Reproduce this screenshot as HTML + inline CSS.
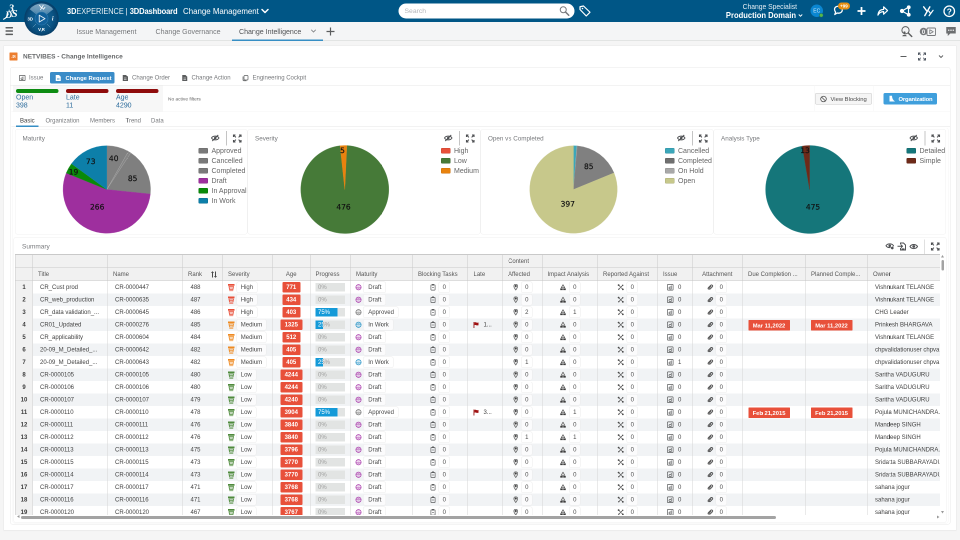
<!DOCTYPE html>
<html lang="en"><head><meta charset="utf-8"><title>3DDashboard - Change Intelligence</title>
<style>
html,body{margin:0;padding:0;background:#f5f5f5;}
body{width:960px;height:540px;overflow:hidden;position:relative;}
#root{position:absolute;left:0;top:0;width:1920px;height:1080px;transform:scale(.5) translateZ(0);will-change:transform;transform-origin:0 0;font-family:"Liberation Sans",sans-serif;color:#555;overflow:hidden;background:#f5f5f5;}
#root *{box-sizing:border-box;}
.abs{position:absolute;white-space:nowrap;}
.topbar{position:absolute;left:0;top:0;width:1920px;height:44px;background:#005686;}
.tabbar{position:absolute;left:0;top:44px;width:1920px;height:38px;background:#f4f5f6;border-bottom:2px solid #e2e4e3;}
.tab{position:absolute;top:9px;font-size:14.1px;color:#77797c;white-space:nowrap;line-height:20px;}
.panel{position:absolute;left:7px;top:91px;width:1906px;height:970px;background:#fff;border:1px solid #e9e9e9;box-shadow:0 1px 2px rgba(0,0,0,.04);}
.inner{position:absolute;left:20px;top:134px;width:1881px;height:915px;border:1px solid #e9e9e9;border-radius:5px;background:#fff;}
.wtab{position:absolute;top:144px;height:23px;font-size:12px;line-height:23px;color:#77797c;white-space:nowrap;}
.kpi{position:absolute;top:178px;width:85px;}
.kpi i{display:block;height:8px;border-radius:4px;}
.kpi b{display:block;font-weight:normal;font-size:14px;line-height:16px;color:#2d6c9c;margin-top:-0.5px;}
.btn{position:absolute;top:186px;height:23px;font-size:11.7px;line-height:21px;border-radius:3px;white-space:nowrap;}
.stab{position:absolute;top:232px;font-size:12px;line-height:18px;color:#77797c;white-space:nowrap;}
.chart{position:absolute;top:258px;height:211px;background:#fff;border:1px solid #f0f0f0;border-radius:5px;}
.ctitle{position:absolute;left:14px;top:10px;font-size:12.6px;line-height:16px;color:#77797c;}
.leg{position:absolute;top:32px;font-size:14px;line-height:20px;color:#666;white-space:nowrap;}
.leg div{height:20px;position:relative;padding-left:26px;}
.leg s{position:absolute;left:0;top:5px;width:19px;height:11px;border-radius:2px;box-shadow:inset 0 0 0 1px rgba(0,0,0,.13);}
.plab{font-family:"DejaVu Sans",sans-serif;font-size:15px;fill:#111;stroke:#111;stroke-width:.35px;text-anchor:middle;}
.summary{position:absolute;left:27px;top:474px;width:1866px;height:572px;background:#fff;border:1px solid #eeeeee;border-radius:5px;}
.th{position:absolute;background:#f1f1f1;border-right:1px solid #c9c9c9;border-bottom:1px solid #c9c9c9;font-size:12px;color:#555;line-height:26px;white-space:nowrap;overflow:hidden;}
.row{position:absolute;left:0;width:1850px;height:25px;font-size:12px;color:#424242;line-height:25px;}
.row.e{background:#f1f3f5;}
.c{position:absolute;top:0;height:25px;white-space:nowrap;overflow:hidden;}
.n{position:absolute;left:0;top:0;width:35px;height:25px;background:#f1f1f1;border-right:1px solid #cfcfcf;text-align:center;font-weight:bold;color:#3c3c3c;}
.vl{position:absolute;top:0;width:1px;background:#d4d4d4;}
.pill{position:absolute;top:1px;height:23px;line-height:21px;border:1px solid #ebebeb;border-radius:4px;background:#fff;padding:0 8px;font-size:12px;color:#4a4a4a;}
.row.e .pill{background:#fbfbfc;}
.age{position:absolute;top:2px;height:21px;line-height:21px;border-radius:2px;background:#e8503a;color:#fff;font-weight:bold;font-size:12px;text-align:center;}
.pb{position:absolute;left:10px;top:4px;width:59px;height:16.5px;background:#e2e4e3;font-size:12px;line-height:16.5px;color:#9c9c9c;overflow:hidden;}
.pb u{position:absolute;left:0;top:0;height:16.5px;background:#149ad8;text-decoration:none;}
.pb span{position:absolute;left:5px;top:0;}
.date{position:absolute;top:2.5px;left:11.5px;width:83px;height:21px;line-height:21px;background:#e8503a;color:#fff;font-weight:bold;font-size:11.6px;text-align:center;border-radius:1px;}
svg{position:absolute;overflow:visible;}
</style></head><body><div id="root">
<div class="topbar"><svg style="left:6px;top:6px" width="34" height="34" viewBox="0 0 34 34"><g fill="#fff" font-family="Liberation Serif" font-style="italic" font-weight="bold"><text x="11.5" y="17" font-size="21">3</text><text x="4.5" y="29.5" font-size="19">D</text><text x="17" y="28" font-size="22">S</text></g><path d="M1 32.5c4-1.5 7-5 9.5-10.5" stroke="#fff" stroke-width="2" fill="none" stroke-linecap="round"/></svg><div class="abs" style="left:134px;top:11px;font-size:16px;line-height:22px;color:#fff;transform:scaleX(.918);transform-origin:0 50%"><b>3D</b><span style="opacity:.92">EXPERIENCE</span> <span style="font-weight:normal">|</span> <b style="font-size:16.5px;letter-spacing:-0.3px">3DDashboard</b></div><div class="abs" style="left:366px;top:10px;font-size:17.2px;line-height:24px;color:#fff;transform:scaleX(.918);transform-origin:0 50%">Change Management</div><svg style="left:522px;top:16px" width="16" height="12" viewBox="0 0 16 12"><path d="M2 3l6 6 6-6" fill="none" stroke="#fff" stroke-width="3" stroke-linecap="round" stroke-linejoin="round"/></svg><div class="abs" style="left:797px;top:7px;width:352px;height:30px;border-radius:15px;background:#fff;"></div><div class="abs" style="left:809px;top:13px;font-size:13.6px;line-height:18px;color:#b4b6ba;">Search</div><svg style="left:1118px;top:11px" width="22" height="22" viewBox="0 0 22 22"><circle cx="8.5" cy="8.5" r="6" fill="none" stroke="#77797c" stroke-width="2"/><path d="M13 13l6.5 6.5" stroke="#77797c" stroke-width="3" stroke-linecap="round"/></svg><svg style="left:1157px;top:9px" width="26" height="26" viewBox="0 0 26 26"><path d="M3 4.5l7-1.5 13 12.5-7.5 7.5L3 10z" fill="none" stroke="#fff" stroke-width="2.4" stroke-linejoin="round"/><circle cx="8" cy="8" r="1.6" fill="#fff"/></svg><div class="abs" style="left:1400px;top:2.5px;width:194px;text-align:right;font-size:14.6px;line-height:20px;color:#e4edf3;transform:scaleX(.925);transform-origin:100% 50%">Change Specialist</div><div class="abs" style="left:1400px;top:20px;width:192px;text-align:right;font-size:16.4px;line-height:20px;color:#fff;font-weight:bold;transform:scaleX(.927);transform-origin:100% 50%">Production Domain</div><svg style="left:1596px;top:27px" width="10" height="8" viewBox="0 0 10 8"><path d="M1.5 2l3.5 3.5L8.5 2" fill="none" stroke="#fff" stroke-width="1.8"/></svg><div class="abs" style="left:1621px;top:9px;width:25px;height:25px;border-radius:50%;background:#0a86d1;color:#d4e9f6;font-size:10px;line-height:25px;text-align:center;">EC</div><div class="abs" style="left:1638px;top:26px;width:9px;height:9px;border-radius:50%;background:#57b847;border:1px solid #005686"></div><svg style="left:1667px;top:11px" width="24" height="22" viewBox="0 0 30 28"><path d="M5 4c6-4 16-2 17 6 .8 7-6 11-13 9l-6 4 2-6C2 13 1 7 5 4z" fill="none" stroke="#fff" stroke-width="3.2" stroke-linejoin="round"/></svg><div class="abs" style="left:1676px;top:5px;width:24px;height:14px;border-radius:7px;background:#e68f12;color:#fff;font-size:9px;line-height:14px;text-align:center;font-weight:bold;">+99</div><svg style="left:1712px;top:11px" width="22" height="22" viewBox="0 0 22 22"><path d="M11 3v16M3 11h16" stroke="#fff" stroke-width="3.5"/></svg><svg style="left:1754px;top:11px" width="23" height="21" viewBox="0 0 26 24"><path d="M2 22c1-9 6-13 13-13V3l9 8.5-9 8.5v-6c-6 0-10 2-13 8z" fill="none" stroke="#fff" stroke-width="2.7" stroke-linejoin="round"/></svg><svg style="left:1799px;top:10px" width="24" height="24" viewBox="0 0 24 24"><path d="M5 12L18 4.5M5 12l13 7.5M18 4.5v15" stroke="#fff" stroke-width="2.4" fill="none"/><circle cx="5" cy="12" r="4.2" fill="#fff"/><circle cx="18.5" cy="4.5" r="3.8" fill="#fff"/><circle cx="18.5" cy="19.5" r="3.8" fill="#fff"/></svg><svg style="left:1844px;top:10px" width="24" height="24" viewBox="0 0 26 26"><path d="M3.5 4l6.5 8.5M17 4L6 23" stroke="#fff" stroke-width="3" fill="none" stroke-linecap="round"/><path d="M14.5 13l3.5 4.5M24 11.5L15.5 23" stroke="#fff" stroke-width="2.6" fill="none" stroke-linecap="round"/></svg><svg style="left:1886px;top:10px" width="26" height="26" viewBox="0 0 26 26"><circle cx="12.5" cy="12.5" r="10.5" fill="none" stroke="#fff" stroke-width="2.6"/><text x="12.5" y="18.5" text-anchor="middle" font-family="Liberation Sans" font-weight="bold" font-size="16.5" fill="#fff">?</text></svg></div><div class="tabbar"><div class="abs" style="left:11px;top:10px;width:15px;height:3px;background:#5b5d5e;box-shadow:0 6.6px 0 #5b5d5e,0 13.2px 0 #5b5d5e;border-radius:1px"></div><div class="tab" style="left:153px">Issue Management</div><div class="tab" style="left:311px">Change Governance</div><div class="tab" style="left:478px;color:#4f5154">Change Intelligence</div><div class="abs" style="left:464px;top:35px;width:182px;height:3px;background:#368ec4"></div><svg style="left:621px;top:14px" width="12" height="8" viewBox="0 0 12 8"><path d="M1.5 1.5l4.5 4.5 4.5-4.5" fill="none" stroke="#77797c" stroke-width="1.6"/></svg><svg style="left:652px;top:10px" width="18" height="18" viewBox="0 0 18 18"><path d="M9 1v16M1 9h16" stroke="#5b5d5e" stroke-width="2.4"/></svg><svg style="left:1801px;top:7px" width="26" height="24" viewBox="0 0 26 24"><circle cx="10" cy="9.5" r="7.2" fill="none" stroke="#5b5d5e" stroke-width="2"/><path d="M15.5 15l7 7" stroke="#5b5d5e" stroke-width="2.8" stroke-linecap="round"/><circle cx="8" cy="14" r="2.2" fill="#5b5d5e"/><path d="M3.5 21.5c.5-4 8.5-4 9 0z" fill="#5b5d5e"/></svg><svg style="left:1838px;top:8px" width="36" height="24" viewBox="0 0 36 24"><circle cx="9" cy="11" r="7.5" fill="#77797c"/><text x="9" y="15.5" text-anchor="middle" font-family="Liberation Sans" font-weight="bold" font-size="12" fill="#f4f5f6">0</text><rect x="16" y="4" width="17" height="15" rx="2" fill="none" stroke="#77797c" stroke-width="1.8"/><path d="M21.5 7.5v8l7-4z" fill="none" stroke="#77797c" stroke-width="1.6" stroke-linejoin="round"/></svg><svg style="left:1891px;top:8px" width="22" height="22" viewBox="0 0 22 22"><path d="M1.5 2h19v13h-11l-5 5v-5h-3z" fill="#6c6e70"/><circle cx="6.5" cy="8.5" r="1.4" fill="#f4f5f6"/><circle cx="11" cy="8.5" r="1.4" fill="#f4f5f6"/><circle cx="15.5" cy="8.5" r="1.4" fill="#f4f5f6"/></svg></div><svg style="left:48px;top:2px" width="70" height="70" viewBox="0 0 70 70">
<defs><radialGradient id="cg" cx="50%" cy="50%" r="50%"><stop offset="0" stop-color="#14649a"/><stop offset=".62" stop-color="#0c5788"/><stop offset=".85" stop-color="#084a78"/><stop offset="1" stop-color="#063d66"/></radialGradient>
<linearGradient id="ch" x1="0" y1="0" x2="0" y2="1"><stop offset="0" stop-color="#a9c6da" stop-opacity=".75"/><stop offset="1" stop-color="#6d9cbd" stop-opacity=".55"/></linearGradient></defs>
<circle cx="35" cy="35" r="34.5" fill="url(#cg)"/>
<path d="M35 35L11.4 16.5A30 30 0 0 1 58.6 16.5Z" fill="url(#ch)"/>
<path d="M35 35L21 21M35 35L49 21" stroke="#0c5788" stroke-width=".6" opacity=".5"/>
<path d="M17.5 52.5l6.5-6.5M52.5 52.5l-6.5-6.5" stroke="#7fa9c6" stroke-width="1"/>
<circle cx="35" cy="35" r="13" fill="#10609a" stroke="#2e7bb0" stroke-width="1.2"/>
<path d="M30.5 28.5v13.5l11.5-6.7z" fill="none" stroke="#e8f1f7" stroke-width="1.8" stroke-linejoin="round"/>
<text x="12.5" y="38.5" font-family="Liberation Sans" font-weight="bold" font-size="8.5" fill="#fff" text-anchor="middle">3D</text>
<text x="35" y="59.5" font-family="Liberation Sans" font-weight="bold" font-size="8.5" fill="#fff" text-anchor="middle">V,R</text>
<text x="57.5" y="39" font-family="Liberation Serif" font-style="italic" font-weight="bold" font-size="12" fill="#fff" text-anchor="middle">i</text>
<path d="M31 8.5l3.5 5M38.5 8.5l-5.5 9M36.5 13.5l2.5 3 3-4" stroke="#fff" stroke-width="1.5" fill="none" stroke-linecap="round"/>
</svg><div class="panel"></div><div class="abs" style="left:19px;top:105px;width:16px;height:16px;background:#ec7d2d;border-radius:1px;color:#fff;font:italic bold 9px/16px 'Liberation Serif',serif;text-align:center;letter-spacing:-1px">3S</div><div class="abs" style="left:46px;top:103px;font-size:13px;line-height:20px;font-weight:bold;color:#66686a;">NETVIBES - Change Intelligence</div><div class="abs" style="left:1801px;top:112px;width:12px;height:2px;background:#5b5d5e"></div><svg style="left:1836px;top:105px" width="16" height="16" viewBox="0 0 16 16"><path d="M1 5V1h4M11 1h4v4M15 11v4h-4M5 15H1v-4" fill="none" stroke="#4d5560" stroke-width="1.9"/><path d="M1 1l4.5 4.5M15 1l-4.5 4.5M15 15l-4.5-4.5M1 15l4.5-4.5" stroke="#4d5560" stroke-width="1.7"/></svg><svg style="left:1877px;top:110px" width="10" height="7" viewBox="0 0 10 7"><path d="M1 1l4 4 4-4" fill="none" stroke="#5b5d5e" stroke-width="1.8"/></svg><div class="inner"></div><svg style="left:38px;top:150px" width="13" height="12" viewBox="0 0 13 12"><rect x=".8" y=".8" width="11.4" height="10.4" rx="1" fill="none" stroke="#5b5d5e" stroke-width="1.4"/><path d="M8 3v6H5.5a1.6 1.6 0 0 1 0-3.2H8" fill="none" stroke="#5b5d5e" stroke-width="1.3"/></svg><div class="wtab" style="left:58px">Issue</div><div class="abs" style="left:100px;top:144px;width:129px;height:23px;background:#3a8cc8;border-radius:3px"></div><svg style="left:111px;top:150px" width="11" height="12" viewBox="0 0 11 12"><path d="M.500 0h6.5l3.5 3.5V12H.500z" fill="#fff"/><path d="M3 7.5h5M3 9.5h5" stroke="#3a8cc8" stroke-width="1"/></svg><div class="wtab" style="left:131px;color:#fff;font-weight:bold;font-size:11.7px">Change Request</div><svg style="left:245px;top:150px" width="11" height="12" viewBox="0 0 11 12"><path d="M.500 0h6.5l3.5 3.5V12H.500z" fill="#5b5d5e"/><path d="M3 6h5M3 8.5h5" stroke="#fff" stroke-width="1"/></svg><div class="wtab" style="left:264px">Change Order</div><svg style="left:364px;top:150px" width="11" height="12" viewBox="0 0 11 12"><path d="M.500 0h6.5l3.5 3.5V12H.500z" fill="#5b5d5e"/><path d="M3 6h5M3 8.5h5" stroke="#fff" stroke-width="1"/></svg><div class="wtab" style="left:383px">Change Action</div><svg style="left:485px;top:150px" width="12" height="12" viewBox="0 0 12 12"><rect x="3" y="1" width="8" height="9" rx="1.5" fill="none" stroke="#5b5d5e" stroke-width="1.4"/><path d="M1 3v6.5a2 2 0 0 0 2 2h5" fill="none" stroke="#5b5d5e" stroke-width="1.4"/></svg><div class="wtab" style="left:505px">Engineering Cockpit</div><div class="abs" style="left:21px;top:170px;width:1879px;height:1px;background:#e6e6e6"></div><div class="abs" style="left:26px;top:171px;width:300px;height:53px;background:#f7f7f7"></div><div class="kpi" style="left:32px"><i style="background:#0d8c12"></i><b>Open</b><b style="margin-top:0.5px">398</b></div><div class="kpi" style="left:132px"><i style="background:#8f0c0c"></i><b>Late</b><b style="margin-top:0.5px">11</b></div><div class="kpi" style="left:232px"><i style="background:#8f0c0c"></i><b>Age</b><b style="margin-top:0.5px">4290</b></div><div class="abs" style="left:336px;top:192px;font-size:9.6px;line-height:12px;color:#666">No active filters</div><div class="btn" style="left:1630px;width:114px;border:1px solid #c8c8c8;background:#f5f5f5;color:#4a4a4a;padding-left:30px">View Blocking</div><svg style="left:1640px;top:191px" width="14" height="14" viewBox="0 0 14 14"><circle cx="7" cy="7" r="5.6" fill="none" stroke="#4a4a4a" stroke-width="1.5"/><path d="M3 3l8 8" stroke="#4a4a4a" stroke-width="1.5"/></svg><div class="btn" style="left:1767px;width:107px;background:#3f9fdc;color:#fff;padding-left:30px;line-height:23px;font-weight:bold;letter-spacing:-0.3px">Organization</div><svg style="left:1778px;top:191px" width="12" height="13" viewBox="0 0 12 13"><path d="M.500 .500h5.5c0 5 2 9 6 11.5H.500z" fill="#fff"/></svg><div class="abs" style="left:23px;top:222px;width:1877px;height:1px;background:#f4f4f4"></div><div class="abs" style="left:1629px;top:170px;width:1px;height:52px;background:#f5f5f5"></div><div class="abs" style="left:1746px;top:170px;width:1px;height:52px;background:#f5f5f5"></div><div class="stab" style="left:40px;color:#3c3c3c">Basic</div><div class="stab" style="left:91px;color:#77797c">Organization</div><div class="stab" style="left:180px;color:#77797c">Members</div><div class="stab" style="left:251px;color:#77797c">Trend</div><div class="stab" style="left:302px;color:#77797c">Data</div><div class="abs" style="left:23px;top:252px;width:1877px;height:1px;background:#e4e4e4"></div><div class="abs" style="left:32px;top:250.5px;width:45px;height:3px;background:#368ec4"></div><div class="abs" style="left:25px;top:255px;width:1872px;height:792px;border:1px solid #f5f5f5;border-radius:5px"></div><div class="chart" style="left:30px;width:465px"><div class="ctitle">Maturity</div><svg style="left:391px;top:10px" width="17" height="14" viewBox="0 0 17 14"><path d="M1 7c3-5 12-5 15 0-3 5-12 5-15 0z" fill="none" stroke="#4d4f52" stroke-width="1.8"/><circle cx="8.5" cy="7" r="2.5" fill="#4d4f52"/><path d="M2.5 13L14.5 1" stroke="#4d4f52" stroke-width="1.9"/></svg><div class="abs" style="left:421px;top:3px;width:1.5px;height:29px;background:#c4c4c4"></div><svg style="left:434.5px;top:9.5px" width="17" height="16" viewBox="0 0 17 16"><path d="M1 5V1h4M12 1h4v4M16 11v4h-4M5 15H1v-4" fill="none" stroke="#4d4f52" stroke-width="2.2"/><path d="M1 1l4.8 4.8M16 1l-4.8 4.8M16 15l-4.8-4.8M1 15l4.8-4.8" stroke="#4d4f52" stroke-width="2"/></svg><div class="leg" style="left:366px"><div><s style="background:#7a7a7a"></s>Approved</div><div><s style="background:#7a7a7a"></s>Cancelled</div><div><s style="background:#7a7a7a"></s>Completed</div><div><s style="background:#9e2f9e"></s>Draft</div><div><s style="background:#0a8a0a"></s>In Approval</div><div><s style="background:#0d7fa9"></s>In Work</div></div></div><div class="chart" style="left:495px;width:466px"><div class="ctitle">Severity</div><svg style="left:392px;top:10px" width="17" height="14" viewBox="0 0 17 14"><path d="M1 7c3-5 12-5 15 0-3 5-12 5-15 0z" fill="none" stroke="#4d4f52" stroke-width="1.8"/><circle cx="8.5" cy="7" r="2.5" fill="#4d4f52"/><path d="M2.5 13L14.5 1" stroke="#4d4f52" stroke-width="1.9"/></svg><div class="abs" style="left:422px;top:3px;width:1.5px;height:29px;background:#c4c4c4"></div><svg style="left:435.5px;top:9.5px" width="17" height="16" viewBox="0 0 17 16"><path d="M1 5V1h4M12 1h4v4M16 11v4h-4M5 15H1v-4" fill="none" stroke="#4d4f52" stroke-width="2.2"/><path d="M1 1l4.8 4.8M16 1l-4.8 4.8M16 15l-4.8-4.8M1 15l4.8-4.8" stroke="#4d4f52" stroke-width="2"/></svg><div class="leg" style="left:386px"><div><s style="background:#e8503a"></s>High</div><div><s style="background:#467a38"></s>Low</div><div><s style="background:#e8820e"></s>Medium</div></div></div><div class="chart" style="left:961px;width:466px"><div class="ctitle">Open vs Completed</div><svg style="left:392px;top:10px" width="17" height="14" viewBox="0 0 17 14"><path d="M1 7c3-5 12-5 15 0-3 5-12 5-15 0z" fill="none" stroke="#4d4f52" stroke-width="1.8"/><circle cx="8.5" cy="7" r="2.5" fill="#4d4f52"/><path d="M2.5 13L14.5 1" stroke="#4d4f52" stroke-width="1.9"/></svg><div class="abs" style="left:422px;top:3px;width:1.5px;height:29px;background:#c4c4c4"></div><svg style="left:435.5px;top:9.5px" width="17" height="16" viewBox="0 0 17 16"><path d="M1 5V1h4M12 1h4v4M16 11v4h-4M5 15H1v-4" fill="none" stroke="#4d4f52" stroke-width="2.2"/><path d="M1 1l4.8 4.8M16 1l-4.8 4.8M16 15l-4.8-4.8M1 15l4.8-4.8" stroke="#4d4f52" stroke-width="2"/></svg><div class="leg" style="left:368px"><div><s style="background:#3ba7ba"></s>Cancelled</div><div><s style="background:#6f6f6f"></s>Completed</div><div><s style="background:#a8a8a8"></s>On Hold</div><div><s style="background:#c7c88b"></s>Open</div></div></div><div class="chart" style="left:1427px;width:465px"><div class="ctitle">Analysis Type</div><svg style="left:391px;top:10px" width="17" height="14" viewBox="0 0 17 14"><path d="M1 7c3-5 12-5 15 0-3 5-12 5-15 0z" fill="none" stroke="#4d4f52" stroke-width="1.8"/><circle cx="8.5" cy="7" r="2.5" fill="#4d4f52"/><path d="M2.5 13L14.5 1" stroke="#4d4f52" stroke-width="1.9"/></svg><div class="abs" style="left:421px;top:3px;width:1.5px;height:29px;background:#c4c4c4"></div><svg style="left:434.5px;top:9.5px" width="17" height="16" viewBox="0 0 17 16"><path d="M1 5V1h4M12 1h4v4M16 11v4h-4M5 15H1v-4" fill="none" stroke="#4d4f52" stroke-width="2.2"/><path d="M1 1l4.8 4.8M16 1l-4.8 4.8M16 15l-4.8-4.8M1 15l4.8-4.8" stroke="#4d4f52" stroke-width="2"/></svg><div class="leg" style="left:385px"><div><s style="background:#15767a"></s>Detailed</div><div><s style="background:#6d2a19"></s>Simple</div></div></div><svg style="left:0;top:0" width="1920" height="480" viewBox="0 0 1920 480"><path d="M213.6 379L213.6 291.5A87.5 87.5 0 0 1 256.7 302.85Z" fill="#808080" stroke="#808080" stroke-width="0.6"/><path d="M213.6 379L256.7 302.85A87.5 87.5 0 0 1 261.51 305.78Z" fill="#858585" stroke="#858585" stroke-width="0.6"/><path d="M213.6 379L261.51 305.78A87.5 87.5 0 0 1 300.64 388Z" fill="#7f7f7f" stroke="#7f7f7f" stroke-width="0.6"/><path d="M213.6 379L300.64 388A87.5 87.5 0 1 1 132.55 346.04Z" fill="#9e2f9e" stroke="#9e2f9e" stroke-width="0.6"/><path d="M213.6 379L132.55 346.04A87.5 87.5 0 0 1 142.94 327.39Z" fill="#0a8a0a" stroke="#0a8a0a" stroke-width="0.6"/><path d="M213.6 379L142.94 327.39A87.5 87.5 0 0 1 213.6 291.5Z" fill="#0d7fa9" stroke="#0d7fa9" stroke-width="0.6"/><path d="M213.6 379L256.5 303.3" stroke="#fff" stroke-opacity=".28" stroke-width="1"/><path d="M213.6 379L261.2 306.2" stroke="#fff" stroke-opacity=".28" stroke-width="1"/><text class="plab" x="227.4" y="321.7">40</text><text class="plab" x="181.4" y="328.1">73</text><text class="plab" x="265.2" y="362.1">85</text><text class="plab" x="147" y="349.3">19</text><text class="plab" x="194.4" y="418.9">266</text><path d="M689.6 379L693.75 291.1A88 88 0 1 1 680.17 291.51Z" fill="#467a38" stroke="#467a38" stroke-width="0.6"/><path d="M689.6 379L680.17 291.51A88 88 0 0 1 693.75 291.1Z" fill="#e8820e" stroke="#e8820e" stroke-width="0.6"/><text class="plab" x="685" y="305.5">5</text><text class="plab" x="687" y="418.5">476</text><path d="M1147 379L1147 291.5A87.5 87.5 0 0 1 1153.74 291.76Z" fill="#3ba7ba" stroke="#3ba7ba" stroke-width="0.6"/><path d="M1147 379L1153.74 291.76A87.5 87.5 0 0 1 1154.86 291.85Z" fill="#aaaaaa" stroke="#aaaaaa" stroke-width="0.6"/><path d="M1147 379L1154.86 291.85A87.5 87.5 0 0 1 1227.97 345.84Z" fill="#808080" stroke="#808080" stroke-width="0.6"/><path d="M1147 379L1227.97 345.84A87.5 87.5 0 1 1 1147 291.5Z" fill="#c7c88b" stroke="#c7c88b" stroke-width="0.6"/><text class="plab" x="1177.5" y="337.5">85</text><text class="plab" x="1135.5" y="412.5">397</text><path d="M1619.2 379L1619.2 291A88 88 0 1 1 1604.54 292.23Z" fill="#15767a" stroke="#15767a" stroke-width="0.6"/><path d="M1619.2 379L1604.54 292.23A88 88 0 0 1 1619.2 291Z" fill="#6d2a19" stroke="#6d2a19" stroke-width="0.6"/><text class="plab" x="1610" y="305.5">13</text><text class="plab" x="1626" y="418.5">475</text></svg><div class="summary"></div><div class="abs" style="left:44px;top:484px;font-size:13px;line-height:18px;color:#77797c">Summary</div><svg style="left:1771px;top:485px" width="18" height="15" viewBox="0 0 18 15"><path d="M1 6.5c3-5 12-5 15 0-3 5-12 5-15 0z" fill="none" stroke="#4d4f52" stroke-width="2"/><circle cx="8.5" cy="6.5" r="2.6" fill="#4d4f52"/><circle cx="13.5" cy="11" r="3.2" fill="#4d4f52" stroke="#fff" stroke-width="1"/></svg><svg style="left:1795px;top:485px" width="17" height="16" viewBox="0 0 17 16"><path d="M6 4V1h6l4 4v10H6v-4" fill="none" stroke="#4d4f52" stroke-width="1.9"/><path d="M0 7.5h9.5M7 4.5l3 3-3 3" fill="none" stroke="#4d4f52" stroke-width="1.9"/><path d="M8 13h6" stroke="#4d4f52" stroke-width="2.4"/></svg><svg style="left:1819px;top:486px" width="17" height="14" viewBox="0 0 17 14"><path d="M1 7c3-5.5 12-5.5 15 0-3 5.5-12 5.5-15 0z" fill="none" stroke="#4d4f52" stroke-width="2"/><circle cx="8.5" cy="7" r="2.8" fill="#4d4f52"/></svg><div class="abs" style="left:1848.5px;top:479px;width:1.5px;height:29px;background:#c0c0c0"></div><svg style="left:1862px;top:485px" width="17" height="16" viewBox="0 0 17 16"><path d="M1 5V1h4M12 1h4v4M16 11v4h-4M5 15H1v-4" fill="none" stroke="#4d4f52" stroke-width="2.2"/><path d="M1 1l4.8 4.8M16 1l-4.8 4.8M16 15l-4.8-4.8M1 15l4.8-4.8" stroke="#4d4f52" stroke-width="2"/></svg><div class="abs" style="left:30px;top:508px;width:1850px;height:522px;overflow:hidden;border-top:1px solid #c9c9c9;border-left:1px solid #c9c9c9;"><div class="th" style="left:0px;top:0;width:34px;height:26px;padding-left:11px;"></div><div class="th" style="left:0px;top:26px;width:34px;height:27px;line-height:27px;padding-left:11px;"></div><div class="th" style="left:34px;top:0;width:150px;height:26px;padding-left:11px;"></div><div class="th" style="left:34px;top:26px;width:150px;height:27px;line-height:27px;padding-left:11px;">Title</div><div class="th" style="left:184px;top:0;width:150px;height:26px;padding-left:11px;"></div><div class="th" style="left:184px;top:26px;width:150px;height:27px;line-height:27px;padding-left:11px;">Name</div><div class="th" style="left:334px;top:0;width:80px;height:26px;padding-left:11px;"></div><div class="th" style="left:334px;top:26px;width:80px;height:27px;line-height:27px;padding-left:11px;">Rank</div><div class="th" style="left:414px;top:0;width:100px;height:26px;padding-left:11px;"></div><div class="th" style="left:414px;top:26px;width:100px;height:27px;line-height:27px;padding-left:11px;">Severity</div><div class="th" style="left:514px;top:0;width:76px;height:26px;padding-left:11px;"></div><div class="th" style="left:514px;top:26px;width:76px;height:27px;line-height:27px;text-align:center;">Age</div><div class="th" style="left:590px;top:0;width:80px;height:26px;padding-left:11px;"></div><div class="th" style="left:590px;top:26px;width:80px;height:27px;line-height:27px;padding-left:10px;">Progress</div><div class="th" style="left:670px;top:0;width:124px;height:26px;padding-left:11px;"></div><div class="th" style="left:670px;top:26px;width:124px;height:27px;line-height:27px;padding-left:11px;">Maturity</div><div class="th" style="left:794px;top:0;width:110px;height:26px;padding-left:11px;"></div><div class="th" style="left:794px;top:26px;width:110px;height:27px;line-height:27px;padding-left:11px;">Blocking Tasks</div><div class="th" style="left:904px;top:0;width:70px;height:26px;padding-left:11px;"></div><div class="th" style="left:904px;top:26px;width:70px;height:27px;line-height:27px;padding-left:12px;">Late</div><div class="th" style="left:974px;top:0;width:81px;height:26px;padding-left:11px;overflow:visible;z-index:2;">Content</div><div class="th" style="left:974px;top:26px;width:81px;height:27px;line-height:27px;padding-left:11px;">Affected</div><div class="th" style="left:1055px;top:0;width:109px;height:26px;padding-left:11px;"></div><div class="th" style="left:1055px;top:26px;width:109px;height:27px;line-height:27px;padding-left:9px;">Impact Analysis</div><div class="th" style="left:1164px;top:0;width:120px;height:26px;padding-left:11px;"></div><div class="th" style="left:1164px;top:26px;width:120px;height:27px;line-height:27px;padding-left:11px;">Reported Against</div><div class="th" style="left:1284px;top:0;width:70px;height:26px;padding-left:11px;"></div><div class="th" style="left:1284px;top:26px;width:70px;height:27px;line-height:27px;padding-left:11px;">Issue</div><div class="th" style="left:1354px;top:0;width:100px;height:26px;padding-left:11px;"></div><div class="th" style="left:1354px;top:26px;width:100px;height:27px;line-height:27px;text-align:center;">Attachment</div><div class="th" style="left:1454px;top:0;width:126px;height:26px;padding-left:11px;"></div><div class="th" style="left:1454px;top:26px;width:126px;height:27px;line-height:27px;padding-left:11px;">Due Completion ...</div><div class="th" style="left:1580px;top:0;width:124px;height:26px;padding-left:11px;"></div><div class="th" style="left:1580px;top:26px;width:124px;height:27px;line-height:27px;padding-left:11px;">Planned Comple...</div><div class="th" style="left:1704px;top:0;width:145px;height:26px;padding-left:11px;border-right:0;"></div><div class="th" style="left:1704px;top:26px;width:145px;height:27px;line-height:27px;padding-left:11px;border-right:0;">Owner</div><svg style="left:391px;top:33px" width="12" height="14" viewBox="0 0 12 14"><path d="M3 1v12M9 1v12" stroke="#4a4a4a" stroke-width="2"/><path d="M0 4l3-3.5L6 4zM6 10l3 3.5 3-3.5z" fill="#4a4a4a"/></svg><div class="row" style="top:53px"><div class="n">1</div><div class="c" style="left:34px;width:149px;padding-left:15px;">CR_Cust prod</div><div class="c" style="left:184px;width:149px;padding-left:15px;">CR-0000447</div><div class="c" style="left:334px;width:79px;padding-left:16px;">488</div><div class="c" style="left:414px;width:99px;"><svg style="left:11px;top:6px" width="13" height="14" viewBox="0 0 13 14"><path d="M0 0h13v3.5H0z" fill="#e8503a"/><path d="M2 5h9l-1 6H3z" fill="none" stroke="#e8503a" stroke-width="1.6"/><path d="M3 8h7" stroke="#e8503a" stroke-width="1.4"/><path d="M2.5 13.5h8" stroke="#e8503a" stroke-width="1.4"/></svg><div class="pill" style="left:27.5px;">High</div></div><div class="c" style="left:514px;width:75px;"><div class="age" style="left:19.5px;width:36px">771</div></div><div class="c" style="left:590px;width:79px;"><div class="pb"><span style="">0%</span></div></div><div class="c" style="left:670px;width:123px;"><svg style="left:10px;top:6px" width="12" height="13" viewBox="0 0 12 13"><circle cx="6" cy="6.5" r="5.2" fill="none" stroke="#a734a8" stroke-width="1.4"/><path d="M1 6.5h10M3.6 4h4.8M3.6 9h4.8" stroke="#a734a8" stroke-width="1.1"/></svg><div class="pill" style="left:25px;padding-left:9.5px">Draft</div></div><div class="c" style="left:794px;width:109px;"><svg style="left:36px;top:6px" width="10" height="13" viewBox="0 0 10 13"><rect x=".8" y="1.8" width="8.4" height="10.4" rx="1.2" fill="none" stroke="#5b5d5e" stroke-width="1.4"/><rect x="3" y="0" width="4" height="3" fill="#5b5d5e"/><path d="M3 7h4" stroke="#5b5d5e" stroke-width="1.2"/></svg><div class="pill" style="left:52px;width:23px;padding:0;text-align:center">0</div></div><div class="c" style="left:904px;width:69px;"></div><div class="c" style="left:974px;width:80px;"><svg style="left:22px;top:6px" width="9" height="13" viewBox="0 0 9 13"><path d="M4.5 .7C6.7 .7 8.3 2.3 8.3 4.4 8.3 7.2 4.5 12 4.5 12S.7 7.2 .7 4.4C.7 2.3 2.3 .7 4.5 .7z" fill="#dcdcdc" stroke="#5b5d5e" stroke-width="1.3"/><circle cx="4.5" cy="4" r="2" fill="#3c3c3c"/></svg><div class="pill" style="left:37px;width:23px;padding:0;text-align:center">0</div></div><div class="c" style="left:1055px;width:108px;"><svg style="left:34px;top:6px" width="12" height="13" viewBox="0 0 12 13"><path d="M6 1.2L2.3 7.5h7.4z" fill="#d8d8d8" stroke="#4a4a4a" stroke-width="1.2" stroke-linejoin="round"/><path d="M.500 8.8h5v3.5h-5zM6.5 8.8h5v3.5h-5z" fill="#3c3c3c"/></svg><div class="pill" style="left:52px;width:23px;padding:0;text-align:center">0</div></div><div class="c" style="left:1164px;width:119px;"><svg style="left:40px;top:6px" width="13" height="13" viewBox="0 0 13 13"><path d="M2 11L11 2" stroke="#4a4a4a" stroke-width="1.5"/><path d="M1 1l5 5M7.5 7.5l4 4" stroke="#4a4a4a" stroke-width="1.2"/><circle cx="2.3" cy="2.3" r="1.8" fill="#4a4a4a"/><circle cx="10.7" cy="10.7" r="1.8" fill="#4a4a4a"/><circle cx="10.5" cy="2.5" r="1.3" fill="#4a4a4a"/><circle cx="2.5" cy="10.5" r="1.3" fill="#4a4a4a"/></svg><div class="pill" style="left:58px;width:23px;padding:0;text-align:center">0</div></div><div class="c" style="left:1284px;width:69px;"><svg style="left:19px;top:6px" width="13" height="13" viewBox="0 0 13 13"><rect x=".8" y=".8" width="11.4" height="11.4" rx="1.2" fill="none" stroke="#5b5d5e" stroke-width="1.4"/><path d="M8.5 3v7H6a2 2 0 0 1 0-4h2.5" fill="none" stroke="#5b5d5e" stroke-width="1.4"/></svg><span style="position:absolute;left:41px">0</span></div><div class="c" style="left:1354px;width:99px;"><svg style="left:30px;top:7px" width="11" height="11" viewBox="0 0 13 13"><path d="M2 11c-1.5-1.5-.5-3 .5-4l5-5c1.5-1.5 3-1 4 0s1 2.5 0 3.5l-5 5c-.8.8-1.8.500-2.3 0s-.6-1.4.2-2.2l4-4" fill="none" stroke="#4a4a4a" stroke-width="2" stroke-linecap="round"/></svg><div class="pill" style="left:46px;width:23px;padding:0;text-align:center">0</div></div><div class="c" style="left:1454px;width:125px;"></div><div class="c" style="left:1580px;width:123px;"></div><div class="c" style="left:1704px;width:144px;padding-left:15px;">Vishnukant TELANGE</div></div><div class="row e" style="top:78px"><div class="n">2</div><div class="c" style="left:34px;width:149px;padding-left:15px;">CR_web_production</div><div class="c" style="left:184px;width:149px;padding-left:15px;">CR-0000635</div><div class="c" style="left:334px;width:79px;padding-left:16px;">487</div><div class="c" style="left:414px;width:99px;"><svg style="left:11px;top:6px" width="13" height="14" viewBox="0 0 13 14"><path d="M0 0h13v3.5H0z" fill="#e8503a"/><path d="M2 5h9l-1 6H3z" fill="none" stroke="#e8503a" stroke-width="1.6"/><path d="M3 8h7" stroke="#e8503a" stroke-width="1.4"/><path d="M2.5 13.5h8" stroke="#e8503a" stroke-width="1.4"/></svg><div class="pill" style="left:27.5px;">High</div></div><div class="c" style="left:514px;width:75px;"><div class="age" style="left:19.5px;width:36px">434</div></div><div class="c" style="left:590px;width:79px;"><div class="pb"><span style="">0%</span></div></div><div class="c" style="left:670px;width:123px;"><svg style="left:10px;top:6px" width="12" height="13" viewBox="0 0 12 13"><circle cx="6" cy="6.5" r="5.2" fill="none" stroke="#a734a8" stroke-width="1.4"/><path d="M1 6.5h10M3.6 4h4.8M3.6 9h4.8" stroke="#a734a8" stroke-width="1.1"/></svg><div class="pill" style="left:25px;padding-left:9.5px">Draft</div></div><div class="c" style="left:794px;width:109px;"><svg style="left:36px;top:6px" width="10" height="13" viewBox="0 0 10 13"><rect x=".8" y="1.8" width="8.4" height="10.4" rx="1.2" fill="none" stroke="#5b5d5e" stroke-width="1.4"/><rect x="3" y="0" width="4" height="3" fill="#5b5d5e"/><path d="M3 7h4" stroke="#5b5d5e" stroke-width="1.2"/></svg><div class="pill" style="left:52px;width:23px;padding:0;text-align:center">0</div></div><div class="c" style="left:904px;width:69px;"></div><div class="c" style="left:974px;width:80px;"><svg style="left:22px;top:6px" width="9" height="13" viewBox="0 0 9 13"><path d="M4.5 .7C6.7 .7 8.3 2.3 8.3 4.4 8.3 7.2 4.5 12 4.5 12S.7 7.2 .7 4.4C.7 2.3 2.3 .7 4.5 .7z" fill="#dcdcdc" stroke="#5b5d5e" stroke-width="1.3"/><circle cx="4.5" cy="4" r="2" fill="#3c3c3c"/></svg><div class="pill" style="left:37px;width:23px;padding:0;text-align:center">0</div></div><div class="c" style="left:1055px;width:108px;"><svg style="left:34px;top:6px" width="12" height="13" viewBox="0 0 12 13"><path d="M6 1.2L2.3 7.5h7.4z" fill="#d8d8d8" stroke="#4a4a4a" stroke-width="1.2" stroke-linejoin="round"/><path d="M.500 8.8h5v3.5h-5zM6.5 8.8h5v3.5h-5z" fill="#3c3c3c"/></svg><div class="pill" style="left:52px;width:23px;padding:0;text-align:center">0</div></div><div class="c" style="left:1164px;width:119px;"><svg style="left:40px;top:6px" width="13" height="13" viewBox="0 0 13 13"><path d="M2 11L11 2" stroke="#4a4a4a" stroke-width="1.5"/><path d="M1 1l5 5M7.5 7.5l4 4" stroke="#4a4a4a" stroke-width="1.2"/><circle cx="2.3" cy="2.3" r="1.8" fill="#4a4a4a"/><circle cx="10.7" cy="10.7" r="1.8" fill="#4a4a4a"/><circle cx="10.5" cy="2.5" r="1.3" fill="#4a4a4a"/><circle cx="2.5" cy="10.5" r="1.3" fill="#4a4a4a"/></svg><div class="pill" style="left:58px;width:23px;padding:0;text-align:center">0</div></div><div class="c" style="left:1284px;width:69px;"><svg style="left:19px;top:6px" width="13" height="13" viewBox="0 0 13 13"><rect x=".8" y=".8" width="11.4" height="11.4" rx="1.2" fill="none" stroke="#5b5d5e" stroke-width="1.4"/><path d="M8.5 3v7H6a2 2 0 0 1 0-4h2.5" fill="none" stroke="#5b5d5e" stroke-width="1.4"/></svg><span style="position:absolute;left:41px">0</span></div><div class="c" style="left:1354px;width:99px;"><svg style="left:30px;top:7px" width="11" height="11" viewBox="0 0 13 13"><path d="M2 11c-1.5-1.5-.5-3 .5-4l5-5c1.5-1.5 3-1 4 0s1 2.5 0 3.5l-5 5c-.8.8-1.8.500-2.3 0s-.6-1.4.2-2.2l4-4" fill="none" stroke="#4a4a4a" stroke-width="2" stroke-linecap="round"/></svg><div class="pill" style="left:46px;width:23px;padding:0;text-align:center">0</div></div><div class="c" style="left:1454px;width:125px;"></div><div class="c" style="left:1580px;width:123px;"></div><div class="c" style="left:1704px;width:144px;padding-left:15px;">Vishnukant TELANGE</div></div><div class="row" style="top:103px"><div class="n">3</div><div class="c" style="left:34px;width:149px;padding-left:15px;">CR_data validation_...</div><div class="c" style="left:184px;width:149px;padding-left:15px;">CR-0000645</div><div class="c" style="left:334px;width:79px;padding-left:16px;">486</div><div class="c" style="left:414px;width:99px;"><svg style="left:11px;top:6px" width="13" height="14" viewBox="0 0 13 14"><path d="M0 0h13v3.5H0z" fill="#e8503a"/><path d="M2 5h9l-1 6H3z" fill="none" stroke="#e8503a" stroke-width="1.6"/><path d="M3 8h7" stroke="#e8503a" stroke-width="1.4"/><path d="M2.5 13.5h8" stroke="#e8503a" stroke-width="1.4"/></svg><div class="pill" style="left:27.5px;">High</div></div><div class="c" style="left:514px;width:75px;"><div class="age" style="left:19.5px;width:36px">403</div></div><div class="c" style="left:590px;width:79px;"><div class="pb"><u style="width:44.2px"></u><span style="color:#fff;">75%</span></div></div><div class="c" style="left:670px;width:123px;"><svg style="left:10px;top:6px" width="12" height="13" viewBox="0 0 12 13"><circle cx="6" cy="6.5" r="5.2" fill="none" stroke="#6e6e6e" stroke-width="1.4"/><path d="M1 6.5h10M3.6 4h4.8M3.6 9h4.8" stroke="#6e6e6e" stroke-width="1.1"/></svg><div class="pill" style="left:25px;padding-left:9.5px">Approved</div></div><div class="c" style="left:794px;width:109px;"><svg style="left:36px;top:6px" width="10" height="13" viewBox="0 0 10 13"><rect x=".8" y="1.8" width="8.4" height="10.4" rx="1.2" fill="none" stroke="#5b5d5e" stroke-width="1.4"/><rect x="3" y="0" width="4" height="3" fill="#5b5d5e"/><path d="M3 7h4" stroke="#5b5d5e" stroke-width="1.2"/></svg><div class="pill" style="left:52px;width:23px;padding:0;text-align:center">0</div></div><div class="c" style="left:904px;width:69px;"></div><div class="c" style="left:974px;width:80px;"><svg style="left:22px;top:6px" width="9" height="13" viewBox="0 0 9 13"><path d="M4.5 .7C6.7 .7 8.3 2.3 8.3 4.4 8.3 7.2 4.5 12 4.5 12S.7 7.2 .7 4.4C.7 2.3 2.3 .7 4.5 .7z" fill="#dcdcdc" stroke="#5b5d5e" stroke-width="1.3"/><circle cx="4.5" cy="4" r="2" fill="#3c3c3c"/></svg><div class="pill" style="left:37px;width:23px;padding:0;text-align:center">2</div></div><div class="c" style="left:1055px;width:108px;"><svg style="left:34px;top:6px" width="12" height="13" viewBox="0 0 12 13"><path d="M6 1.2L2.3 7.5h7.4z" fill="#d8d8d8" stroke="#4a4a4a" stroke-width="1.2" stroke-linejoin="round"/><path d="M.500 8.8h5v3.5h-5zM6.5 8.8h5v3.5h-5z" fill="#3c3c3c"/></svg><div class="pill" style="left:52px;width:23px;padding:0;text-align:center">1</div></div><div class="c" style="left:1164px;width:119px;"><svg style="left:40px;top:6px" width="13" height="13" viewBox="0 0 13 13"><path d="M2 11L11 2" stroke="#4a4a4a" stroke-width="1.5"/><path d="M1 1l5 5M7.5 7.5l4 4" stroke="#4a4a4a" stroke-width="1.2"/><circle cx="2.3" cy="2.3" r="1.8" fill="#4a4a4a"/><circle cx="10.7" cy="10.7" r="1.8" fill="#4a4a4a"/><circle cx="10.5" cy="2.5" r="1.3" fill="#4a4a4a"/><circle cx="2.5" cy="10.5" r="1.3" fill="#4a4a4a"/></svg><div class="pill" style="left:58px;width:23px;padding:0;text-align:center">0</div></div><div class="c" style="left:1284px;width:69px;"><svg style="left:19px;top:6px" width="13" height="13" viewBox="0 0 13 13"><rect x=".8" y=".8" width="11.4" height="11.4" rx="1.2" fill="none" stroke="#5b5d5e" stroke-width="1.4"/><path d="M8.5 3v7H6a2 2 0 0 1 0-4h2.5" fill="none" stroke="#5b5d5e" stroke-width="1.4"/></svg><span style="position:absolute;left:41px">0</span></div><div class="c" style="left:1354px;width:99px;"><svg style="left:30px;top:7px" width="11" height="11" viewBox="0 0 13 13"><path d="M2 11c-1.5-1.5-.5-3 .5-4l5-5c1.5-1.5 3-1 4 0s1 2.5 0 3.5l-5 5c-.8.8-1.8.500-2.3 0s-.6-1.4.2-2.2l4-4" fill="none" stroke="#4a4a4a" stroke-width="2" stroke-linecap="round"/></svg><div class="pill" style="left:46px;width:23px;padding:0;text-align:center">0</div></div><div class="c" style="left:1454px;width:125px;"></div><div class="c" style="left:1580px;width:123px;"></div><div class="c" style="left:1704px;width:144px;padding-left:15px;">CHG Leader</div></div><div class="row e" style="top:128px"><div class="n">4</div><div class="c" style="left:34px;width:149px;padding-left:15px;">CR01_Updated</div><div class="c" style="left:184px;width:149px;padding-left:15px;">CR-0000276</div><div class="c" style="left:334px;width:79px;padding-left:16px;">485</div><div class="c" style="left:414px;width:99px;"><svg style="left:11px;top:6px" width="13" height="14" viewBox="0 0 13 14"><path d="M0 0h13v3.5H0z" fill="#ee8a22"/><path d="M2 5h9l-1 6H3z" fill="none" stroke="#ee8a22" stroke-width="1.6"/><path d="M3 8h7" stroke="#ee8a22" stroke-width="1.4"/><path d="M2.5 13.5h8" stroke="#ee8a22" stroke-width="1.4"/></svg><div class="pill" style="left:27.5px;">Medium</div></div><div class="c" style="left:514px;width:75px;"><div class="age" style="left:15.5px;width:44px">1325</div></div><div class="c" style="left:590px;width:79px;"><div class="pb"><span>25%</span><u style="width:14.8px;overflow:hidden;position:absolute"><span style="color:#fff;left:5px;position:absolute">25%</span></u></div></div><div class="c" style="left:670px;width:123px;"><svg style="left:10px;top:6px" width="12" height="13" viewBox="0 0 12 13"><circle cx="6" cy="6.5" r="5.2" fill="none" stroke="#1f8fc4" stroke-width="1.4"/><path d="M1 6.5h10M3.6 4h4.8M3.6 9h4.8" stroke="#1f8fc4" stroke-width="1.1"/></svg><div class="pill" style="left:25px;padding-left:9.5px">In Work</div></div><div class="c" style="left:794px;width:109px;"><svg style="left:36px;top:6px" width="10" height="13" viewBox="0 0 10 13"><rect x=".8" y="1.8" width="8.4" height="10.4" rx="1.2" fill="none" stroke="#5b5d5e" stroke-width="1.4"/><rect x="3" y="0" width="4" height="3" fill="#5b5d5e"/><path d="M3 7h4" stroke="#5b5d5e" stroke-width="1.2"/></svg><div class="pill" style="left:52px;width:23px;padding:0;text-align:center">0</div></div><div class="c" style="left:904px;width:69px;"><svg style="left:12px;top:6.5px" width="10" height="12" viewBox="0 0 11 13"><path d="M1 0v13" stroke="#8f0c0c" stroke-width="1.8"/><path d="M2 1c3-1.5 5 1.5 9 0v6c-4 1.5-6-1.5-9 0z" fill="#a01010"/></svg><span style="position:absolute;left:32px">1...</span></div><div class="c" style="left:974px;width:80px;"><svg style="left:22px;top:6px" width="9" height="13" viewBox="0 0 9 13"><path d="M4.5 .7C6.7 .7 8.3 2.3 8.3 4.4 8.3 7.2 4.5 12 4.5 12S.7 7.2 .7 4.4C.7 2.3 2.3 .7 4.5 .7z" fill="#dcdcdc" stroke="#5b5d5e" stroke-width="1.3"/><circle cx="4.5" cy="4" r="2" fill="#3c3c3c"/></svg><div class="pill" style="left:37px;width:23px;padding:0;text-align:center">0</div></div><div class="c" style="left:1055px;width:108px;"><svg style="left:34px;top:6px" width="12" height="13" viewBox="0 0 12 13"><path d="M6 1.2L2.3 7.5h7.4z" fill="#d8d8d8" stroke="#4a4a4a" stroke-width="1.2" stroke-linejoin="round"/><path d="M.500 8.8h5v3.5h-5zM6.5 8.8h5v3.5h-5z" fill="#3c3c3c"/></svg><div class="pill" style="left:52px;width:23px;padding:0;text-align:center">0</div></div><div class="c" style="left:1164px;width:119px;"><svg style="left:40px;top:6px" width="13" height="13" viewBox="0 0 13 13"><path d="M2 11L11 2" stroke="#4a4a4a" stroke-width="1.5"/><path d="M1 1l5 5M7.5 7.5l4 4" stroke="#4a4a4a" stroke-width="1.2"/><circle cx="2.3" cy="2.3" r="1.8" fill="#4a4a4a"/><circle cx="10.7" cy="10.7" r="1.8" fill="#4a4a4a"/><circle cx="10.5" cy="2.5" r="1.3" fill="#4a4a4a"/><circle cx="2.5" cy="10.5" r="1.3" fill="#4a4a4a"/></svg><div class="pill" style="left:58px;width:23px;padding:0;text-align:center">0</div></div><div class="c" style="left:1284px;width:69px;"><svg style="left:19px;top:6px" width="13" height="13" viewBox="0 0 13 13"><rect x=".8" y=".8" width="11.4" height="11.4" rx="1.2" fill="none" stroke="#5b5d5e" stroke-width="1.4"/><path d="M8.5 3v7H6a2 2 0 0 1 0-4h2.5" fill="none" stroke="#5b5d5e" stroke-width="1.4"/></svg><span style="position:absolute;left:41px">0</span></div><div class="c" style="left:1354px;width:99px;"><svg style="left:30px;top:7px" width="11" height="11" viewBox="0 0 13 13"><path d="M2 11c-1.5-1.5-.5-3 .5-4l5-5c1.5-1.5 3-1 4 0s1 2.5 0 3.5l-5 5c-.8.8-1.8.500-2.3 0s-.6-1.4.2-2.2l4-4" fill="none" stroke="#4a4a4a" stroke-width="2" stroke-linecap="round"/></svg><div class="pill" style="left:46px;width:23px;padding:0;text-align:center">0</div></div><div class="c" style="left:1454px;width:125px;"><div class="date">Mar 11,2022</div></div><div class="c" style="left:1580px;width:123px;"><div class="date" style="left:10.5px">Mar 11,2022</div></div><div class="c" style="left:1704px;width:144px;padding-left:15px;">Prinkesh BHARGAVA</div></div><div class="row" style="top:153px"><div class="n">5</div><div class="c" style="left:34px;width:149px;padding-left:15px;">CR_applicability</div><div class="c" style="left:184px;width:149px;padding-left:15px;">CR-0000604</div><div class="c" style="left:334px;width:79px;padding-left:16px;">484</div><div class="c" style="left:414px;width:99px;"><svg style="left:11px;top:6px" width="13" height="14" viewBox="0 0 13 14"><path d="M0 0h13v3.5H0z" fill="#ee8a22"/><path d="M2 5h9l-1 6H3z" fill="none" stroke="#ee8a22" stroke-width="1.6"/><path d="M3 8h7" stroke="#ee8a22" stroke-width="1.4"/><path d="M2.5 13.5h8" stroke="#ee8a22" stroke-width="1.4"/></svg><div class="pill" style="left:27.5px;">Medium</div></div><div class="c" style="left:514px;width:75px;"><div class="age" style="left:19.5px;width:36px">512</div></div><div class="c" style="left:590px;width:79px;"><div class="pb"><span style="">0%</span></div></div><div class="c" style="left:670px;width:123px;"><svg style="left:10px;top:6px" width="12" height="13" viewBox="0 0 12 13"><circle cx="6" cy="6.5" r="5.2" fill="none" stroke="#a734a8" stroke-width="1.4"/><path d="M1 6.5h10M3.6 4h4.8M3.6 9h4.8" stroke="#a734a8" stroke-width="1.1"/></svg><div class="pill" style="left:25px;padding-left:9.5px">Draft</div></div><div class="c" style="left:794px;width:109px;"><svg style="left:36px;top:6px" width="10" height="13" viewBox="0 0 10 13"><rect x=".8" y="1.8" width="8.4" height="10.4" rx="1.2" fill="none" stroke="#5b5d5e" stroke-width="1.4"/><rect x="3" y="0" width="4" height="3" fill="#5b5d5e"/><path d="M3 7h4" stroke="#5b5d5e" stroke-width="1.2"/></svg><div class="pill" style="left:52px;width:23px;padding:0;text-align:center">0</div></div><div class="c" style="left:904px;width:69px;"></div><div class="c" style="left:974px;width:80px;"><svg style="left:22px;top:6px" width="9" height="13" viewBox="0 0 9 13"><path d="M4.5 .7C6.7 .7 8.3 2.3 8.3 4.4 8.3 7.2 4.5 12 4.5 12S.7 7.2 .7 4.4C.7 2.3 2.3 .7 4.5 .7z" fill="#dcdcdc" stroke="#5b5d5e" stroke-width="1.3"/><circle cx="4.5" cy="4" r="2" fill="#3c3c3c"/></svg><div class="pill" style="left:37px;width:23px;padding:0;text-align:center">0</div></div><div class="c" style="left:1055px;width:108px;"><svg style="left:34px;top:6px" width="12" height="13" viewBox="0 0 12 13"><path d="M6 1.2L2.3 7.5h7.4z" fill="#d8d8d8" stroke="#4a4a4a" stroke-width="1.2" stroke-linejoin="round"/><path d="M.500 8.8h5v3.5h-5zM6.5 8.8h5v3.5h-5z" fill="#3c3c3c"/></svg><div class="pill" style="left:52px;width:23px;padding:0;text-align:center">0</div></div><div class="c" style="left:1164px;width:119px;"><svg style="left:40px;top:6px" width="13" height="13" viewBox="0 0 13 13"><path d="M2 11L11 2" stroke="#4a4a4a" stroke-width="1.5"/><path d="M1 1l5 5M7.5 7.5l4 4" stroke="#4a4a4a" stroke-width="1.2"/><circle cx="2.3" cy="2.3" r="1.8" fill="#4a4a4a"/><circle cx="10.7" cy="10.7" r="1.8" fill="#4a4a4a"/><circle cx="10.5" cy="2.5" r="1.3" fill="#4a4a4a"/><circle cx="2.5" cy="10.5" r="1.3" fill="#4a4a4a"/></svg><div class="pill" style="left:58px;width:23px;padding:0;text-align:center">0</div></div><div class="c" style="left:1284px;width:69px;"><svg style="left:19px;top:6px" width="13" height="13" viewBox="0 0 13 13"><rect x=".8" y=".8" width="11.4" height="11.4" rx="1.2" fill="none" stroke="#5b5d5e" stroke-width="1.4"/><path d="M8.5 3v7H6a2 2 0 0 1 0-4h2.5" fill="none" stroke="#5b5d5e" stroke-width="1.4"/></svg><span style="position:absolute;left:41px">0</span></div><div class="c" style="left:1354px;width:99px;"><svg style="left:30px;top:7px" width="11" height="11" viewBox="0 0 13 13"><path d="M2 11c-1.5-1.5-.5-3 .5-4l5-5c1.5-1.5 3-1 4 0s1 2.5 0 3.5l-5 5c-.8.8-1.8.500-2.3 0s-.6-1.4.2-2.2l4-4" fill="none" stroke="#4a4a4a" stroke-width="2" stroke-linecap="round"/></svg><div class="pill" style="left:46px;width:23px;padding:0;text-align:center">0</div></div><div class="c" style="left:1454px;width:125px;"></div><div class="c" style="left:1580px;width:123px;"></div><div class="c" style="left:1704px;width:144px;padding-left:15px;">Vishnukant TELANGE</div></div><div class="row e" style="top:178px"><div class="n">6</div><div class="c" style="left:34px;width:149px;padding-left:15px;">20-09_M_Detailed_...</div><div class="c" style="left:184px;width:149px;padding-left:15px;">CR-0000642</div><div class="c" style="left:334px;width:79px;padding-left:16px;">482</div><div class="c" style="left:414px;width:99px;"><svg style="left:11px;top:6px" width="13" height="14" viewBox="0 0 13 14"><path d="M0 0h13v3.5H0z" fill="#ee8a22"/><path d="M2 5h9l-1 6H3z" fill="none" stroke="#ee8a22" stroke-width="1.6"/><path d="M3 8h7" stroke="#ee8a22" stroke-width="1.4"/><path d="M2.5 13.5h8" stroke="#ee8a22" stroke-width="1.4"/></svg><div class="pill" style="left:27.5px;">Medium</div></div><div class="c" style="left:514px;width:75px;"><div class="age" style="left:19.5px;width:36px">405</div></div><div class="c" style="left:590px;width:79px;"><div class="pb"><span style="">0%</span></div></div><div class="c" style="left:670px;width:123px;"><svg style="left:10px;top:6px" width="12" height="13" viewBox="0 0 12 13"><circle cx="6" cy="6.5" r="5.2" fill="none" stroke="#a734a8" stroke-width="1.4"/><path d="M1 6.5h10M3.6 4h4.8M3.6 9h4.8" stroke="#a734a8" stroke-width="1.1"/></svg><div class="pill" style="left:25px;padding-left:9.5px">Draft</div></div><div class="c" style="left:794px;width:109px;"><svg style="left:36px;top:6px" width="10" height="13" viewBox="0 0 10 13"><rect x=".8" y="1.8" width="8.4" height="10.4" rx="1.2" fill="none" stroke="#5b5d5e" stroke-width="1.4"/><rect x="3" y="0" width="4" height="3" fill="#5b5d5e"/><path d="M3 7h4" stroke="#5b5d5e" stroke-width="1.2"/></svg><div class="pill" style="left:52px;width:23px;padding:0;text-align:center">0</div></div><div class="c" style="left:904px;width:69px;"></div><div class="c" style="left:974px;width:80px;"><svg style="left:22px;top:6px" width="9" height="13" viewBox="0 0 9 13"><path d="M4.5 .7C6.7 .7 8.3 2.3 8.3 4.4 8.3 7.2 4.5 12 4.5 12S.7 7.2 .7 4.4C.7 2.3 2.3 .7 4.5 .7z" fill="#dcdcdc" stroke="#5b5d5e" stroke-width="1.3"/><circle cx="4.5" cy="4" r="2" fill="#3c3c3c"/></svg><div class="pill" style="left:37px;width:23px;padding:0;text-align:center">0</div></div><div class="c" style="left:1055px;width:108px;"><svg style="left:34px;top:6px" width="12" height="13" viewBox="0 0 12 13"><path d="M6 1.2L2.3 7.5h7.4z" fill="#d8d8d8" stroke="#4a4a4a" stroke-width="1.2" stroke-linejoin="round"/><path d="M.500 8.8h5v3.5h-5zM6.5 8.8h5v3.5h-5z" fill="#3c3c3c"/></svg><div class="pill" style="left:52px;width:23px;padding:0;text-align:center">0</div></div><div class="c" style="left:1164px;width:119px;"><svg style="left:40px;top:6px" width="13" height="13" viewBox="0 0 13 13"><path d="M2 11L11 2" stroke="#4a4a4a" stroke-width="1.5"/><path d="M1 1l5 5M7.5 7.5l4 4" stroke="#4a4a4a" stroke-width="1.2"/><circle cx="2.3" cy="2.3" r="1.8" fill="#4a4a4a"/><circle cx="10.7" cy="10.7" r="1.8" fill="#4a4a4a"/><circle cx="10.5" cy="2.5" r="1.3" fill="#4a4a4a"/><circle cx="2.5" cy="10.5" r="1.3" fill="#4a4a4a"/></svg><div class="pill" style="left:58px;width:23px;padding:0;text-align:center">0</div></div><div class="c" style="left:1284px;width:69px;"><svg style="left:19px;top:6px" width="13" height="13" viewBox="0 0 13 13"><rect x=".8" y=".8" width="11.4" height="11.4" rx="1.2" fill="none" stroke="#5b5d5e" stroke-width="1.4"/><path d="M8.5 3v7H6a2 2 0 0 1 0-4h2.5" fill="none" stroke="#5b5d5e" stroke-width="1.4"/></svg><span style="position:absolute;left:41px">0</span></div><div class="c" style="left:1354px;width:99px;"><svg style="left:30px;top:7px" width="11" height="11" viewBox="0 0 13 13"><path d="M2 11c-1.5-1.5-.5-3 .5-4l5-5c1.5-1.5 3-1 4 0s1 2.5 0 3.5l-5 5c-.8.8-1.8.500-2.3 0s-.6-1.4.2-2.2l4-4" fill="none" stroke="#4a4a4a" stroke-width="2" stroke-linecap="round"/></svg><div class="pill" style="left:46px;width:23px;padding:0;text-align:center">0</div></div><div class="c" style="left:1454px;width:125px;"></div><div class="c" style="left:1580px;width:123px;"></div><div class="c" style="left:1704px;width:144px;padding-left:15px;">chpvalidationuser chpva</div></div><div class="row" style="top:203px"><div class="n">7</div><div class="c" style="left:34px;width:149px;padding-left:15px;">20-09_M_Detailed_...</div><div class="c" style="left:184px;width:149px;padding-left:15px;">CR-0000643</div><div class="c" style="left:334px;width:79px;padding-left:16px;">482</div><div class="c" style="left:414px;width:99px;"><svg style="left:11px;top:6px" width="13" height="14" viewBox="0 0 13 14"><path d="M0 0h13v3.5H0z" fill="#ee8a22"/><path d="M2 5h9l-1 6H3z" fill="none" stroke="#ee8a22" stroke-width="1.6"/><path d="M3 8h7" stroke="#ee8a22" stroke-width="1.4"/><path d="M2.5 13.5h8" stroke="#ee8a22" stroke-width="1.4"/></svg><div class="pill" style="left:27.5px;">Medium</div></div><div class="c" style="left:514px;width:75px;"><div class="age" style="left:19.5px;width:36px">405</div></div><div class="c" style="left:590px;width:79px;"><div class="pb"><span>25%</span><u style="width:14.8px;overflow:hidden;position:absolute"><span style="color:#fff;left:5px;position:absolute">25%</span></u></div></div><div class="c" style="left:670px;width:123px;"><svg style="left:10px;top:6px" width="12" height="13" viewBox="0 0 12 13"><circle cx="6" cy="6.5" r="5.2" fill="none" stroke="#1f8fc4" stroke-width="1.4"/><path d="M1 6.5h10M3.6 4h4.8M3.6 9h4.8" stroke="#1f8fc4" stroke-width="1.1"/></svg><div class="pill" style="left:25px;padding-left:9.5px">In Work</div></div><div class="c" style="left:794px;width:109px;"><svg style="left:36px;top:6px" width="10" height="13" viewBox="0 0 10 13"><rect x=".8" y="1.8" width="8.4" height="10.4" rx="1.2" fill="none" stroke="#5b5d5e" stroke-width="1.4"/><rect x="3" y="0" width="4" height="3" fill="#5b5d5e"/><path d="M3 7h4" stroke="#5b5d5e" stroke-width="1.2"/></svg><div class="pill" style="left:52px;width:23px;padding:0;text-align:center">0</div></div><div class="c" style="left:904px;width:69px;"></div><div class="c" style="left:974px;width:80px;"><svg style="left:22px;top:6px" width="9" height="13" viewBox="0 0 9 13"><path d="M4.5 .7C6.7 .7 8.3 2.3 8.3 4.4 8.3 7.2 4.5 12 4.5 12S.7 7.2 .7 4.4C.7 2.3 2.3 .7 4.5 .7z" fill="#dcdcdc" stroke="#5b5d5e" stroke-width="1.3"/><circle cx="4.5" cy="4" r="2" fill="#3c3c3c"/></svg><div class="pill" style="left:37px;width:23px;padding:0;text-align:center">1</div></div><div class="c" style="left:1055px;width:108px;"><svg style="left:34px;top:6px" width="12" height="13" viewBox="0 0 12 13"><path d="M6 1.2L2.3 7.5h7.4z" fill="#d8d8d8" stroke="#4a4a4a" stroke-width="1.2" stroke-linejoin="round"/><path d="M.500 8.8h5v3.5h-5zM6.5 8.8h5v3.5h-5z" fill="#3c3c3c"/></svg><div class="pill" style="left:52px;width:23px;padding:0;text-align:center">0</div></div><div class="c" style="left:1164px;width:119px;"><svg style="left:40px;top:6px" width="13" height="13" viewBox="0 0 13 13"><path d="M2 11L11 2" stroke="#4a4a4a" stroke-width="1.5"/><path d="M1 1l5 5M7.5 7.5l4 4" stroke="#4a4a4a" stroke-width="1.2"/><circle cx="2.3" cy="2.3" r="1.8" fill="#4a4a4a"/><circle cx="10.7" cy="10.7" r="1.8" fill="#4a4a4a"/><circle cx="10.5" cy="2.5" r="1.3" fill="#4a4a4a"/><circle cx="2.5" cy="10.5" r="1.3" fill="#4a4a4a"/></svg><div class="pill" style="left:58px;width:23px;padding:0;text-align:center">0</div></div><div class="c" style="left:1284px;width:69px;"><svg style="left:19px;top:6px" width="13" height="13" viewBox="0 0 13 13"><rect x=".8" y=".8" width="11.4" height="11.4" rx="1.2" fill="none" stroke="#5b5d5e" stroke-width="1.4"/><path d="M8.5 3v7H6a2 2 0 0 1 0-4h2.5" fill="none" stroke="#5b5d5e" stroke-width="1.4"/></svg><span style="position:absolute;left:41px">1</span></div><div class="c" style="left:1354px;width:99px;"><svg style="left:30px;top:7px" width="11" height="11" viewBox="0 0 13 13"><path d="M2 11c-1.5-1.5-.5-3 .5-4l5-5c1.5-1.5 3-1 4 0s1 2.5 0 3.5l-5 5c-.8.8-1.8.500-2.3 0s-.6-1.4.2-2.2l4-4" fill="none" stroke="#4a4a4a" stroke-width="2" stroke-linecap="round"/></svg><div class="pill" style="left:46px;width:23px;padding:0;text-align:center">0</div></div><div class="c" style="left:1454px;width:125px;"></div><div class="c" style="left:1580px;width:123px;"></div><div class="c" style="left:1704px;width:144px;padding-left:15px;">chpvalidationuser chpva</div></div><div class="row e" style="top:228px"><div class="n">8</div><div class="c" style="left:34px;width:149px;padding-left:15px;">CR-0000105</div><div class="c" style="left:184px;width:149px;padding-left:15px;">CR-0000105</div><div class="c" style="left:334px;width:79px;padding-left:16px;">480</div><div class="c" style="left:414px;width:99px;"><svg style="left:11px;top:6px" width="13" height="14" viewBox="0 0 13 14"><path d="M0 0h13v3.5H0z" fill="#4f8a3c"/><path d="M2 5h9l-1 6H3z" fill="none" stroke="#4f8a3c" stroke-width="1.6"/><path d="M3 8h7" stroke="#4f8a3c" stroke-width="1.4"/><path d="M2.5 13.5h8" stroke="#4f8a3c" stroke-width="1.4"/></svg><div class="pill" style="left:27.5px;">Low</div></div><div class="c" style="left:514px;width:75px;"><div class="age" style="left:15.5px;width:44px">4244</div></div><div class="c" style="left:590px;width:79px;"><div class="pb"><span style="">0%</span></div></div><div class="c" style="left:670px;width:123px;"><svg style="left:10px;top:6px" width="12" height="13" viewBox="0 0 12 13"><circle cx="6" cy="6.5" r="5.2" fill="none" stroke="#a734a8" stroke-width="1.4"/><path d="M1 6.5h10M3.6 4h4.8M3.6 9h4.8" stroke="#a734a8" stroke-width="1.1"/></svg><div class="pill" style="left:25px;padding-left:9.5px">Draft</div></div><div class="c" style="left:794px;width:109px;"><svg style="left:36px;top:6px" width="10" height="13" viewBox="0 0 10 13"><rect x=".8" y="1.8" width="8.4" height="10.4" rx="1.2" fill="none" stroke="#5b5d5e" stroke-width="1.4"/><rect x="3" y="0" width="4" height="3" fill="#5b5d5e"/><path d="M3 7h4" stroke="#5b5d5e" stroke-width="1.2"/></svg><div class="pill" style="left:52px;width:23px;padding:0;text-align:center">0</div></div><div class="c" style="left:904px;width:69px;"></div><div class="c" style="left:974px;width:80px;"><svg style="left:22px;top:6px" width="9" height="13" viewBox="0 0 9 13"><path d="M4.5 .7C6.7 .7 8.3 2.3 8.3 4.4 8.3 7.2 4.5 12 4.5 12S.7 7.2 .7 4.4C.7 2.3 2.3 .7 4.5 .7z" fill="#dcdcdc" stroke="#5b5d5e" stroke-width="1.3"/><circle cx="4.5" cy="4" r="2" fill="#3c3c3c"/></svg><div class="pill" style="left:37px;width:23px;padding:0;text-align:center">0</div></div><div class="c" style="left:1055px;width:108px;"><svg style="left:34px;top:6px" width="12" height="13" viewBox="0 0 12 13"><path d="M6 1.2L2.3 7.5h7.4z" fill="#d8d8d8" stroke="#4a4a4a" stroke-width="1.2" stroke-linejoin="round"/><path d="M.500 8.8h5v3.5h-5zM6.5 8.8h5v3.5h-5z" fill="#3c3c3c"/></svg><div class="pill" style="left:52px;width:23px;padding:0;text-align:center">0</div></div><div class="c" style="left:1164px;width:119px;"><svg style="left:40px;top:6px" width="13" height="13" viewBox="0 0 13 13"><path d="M2 11L11 2" stroke="#4a4a4a" stroke-width="1.5"/><path d="M1 1l5 5M7.5 7.5l4 4" stroke="#4a4a4a" stroke-width="1.2"/><circle cx="2.3" cy="2.3" r="1.8" fill="#4a4a4a"/><circle cx="10.7" cy="10.7" r="1.8" fill="#4a4a4a"/><circle cx="10.5" cy="2.5" r="1.3" fill="#4a4a4a"/><circle cx="2.5" cy="10.5" r="1.3" fill="#4a4a4a"/></svg><div class="pill" style="left:58px;width:23px;padding:0;text-align:center">0</div></div><div class="c" style="left:1284px;width:69px;"><svg style="left:19px;top:6px" width="13" height="13" viewBox="0 0 13 13"><rect x=".8" y=".8" width="11.4" height="11.4" rx="1.2" fill="none" stroke="#5b5d5e" stroke-width="1.4"/><path d="M8.5 3v7H6a2 2 0 0 1 0-4h2.5" fill="none" stroke="#5b5d5e" stroke-width="1.4"/></svg><span style="position:absolute;left:41px">0</span></div><div class="c" style="left:1354px;width:99px;"><svg style="left:30px;top:7px" width="11" height="11" viewBox="0 0 13 13"><path d="M2 11c-1.5-1.5-.5-3 .5-4l5-5c1.5-1.5 3-1 4 0s1 2.5 0 3.5l-5 5c-.8.8-1.8.500-2.3 0s-.6-1.4.2-2.2l4-4" fill="none" stroke="#4a4a4a" stroke-width="2" stroke-linecap="round"/></svg><div class="pill" style="left:46px;width:23px;padding:0;text-align:center">0</div></div><div class="c" style="left:1454px;width:125px;"></div><div class="c" style="left:1580px;width:123px;"></div><div class="c" style="left:1704px;width:144px;padding-left:15px;">Saritha VADUGURU</div></div><div class="row" style="top:253px"><div class="n">9</div><div class="c" style="left:34px;width:149px;padding-left:15px;">CR-0000106</div><div class="c" style="left:184px;width:149px;padding-left:15px;">CR-0000106</div><div class="c" style="left:334px;width:79px;padding-left:16px;">480</div><div class="c" style="left:414px;width:99px;"><svg style="left:11px;top:6px" width="13" height="14" viewBox="0 0 13 14"><path d="M0 0h13v3.5H0z" fill="#4f8a3c"/><path d="M2 5h9l-1 6H3z" fill="none" stroke="#4f8a3c" stroke-width="1.6"/><path d="M3 8h7" stroke="#4f8a3c" stroke-width="1.4"/><path d="M2.5 13.5h8" stroke="#4f8a3c" stroke-width="1.4"/></svg><div class="pill" style="left:27.5px;">Low</div></div><div class="c" style="left:514px;width:75px;"><div class="age" style="left:15.5px;width:44px">4244</div></div><div class="c" style="left:590px;width:79px;"><div class="pb"><span style="">0%</span></div></div><div class="c" style="left:670px;width:123px;"><svg style="left:10px;top:6px" width="12" height="13" viewBox="0 0 12 13"><circle cx="6" cy="6.5" r="5.2" fill="none" stroke="#a734a8" stroke-width="1.4"/><path d="M1 6.5h10M3.6 4h4.8M3.6 9h4.8" stroke="#a734a8" stroke-width="1.1"/></svg><div class="pill" style="left:25px;padding-left:9.5px">Draft</div></div><div class="c" style="left:794px;width:109px;"><svg style="left:36px;top:6px" width="10" height="13" viewBox="0 0 10 13"><rect x=".8" y="1.8" width="8.4" height="10.4" rx="1.2" fill="none" stroke="#5b5d5e" stroke-width="1.4"/><rect x="3" y="0" width="4" height="3" fill="#5b5d5e"/><path d="M3 7h4" stroke="#5b5d5e" stroke-width="1.2"/></svg><div class="pill" style="left:52px;width:23px;padding:0;text-align:center">0</div></div><div class="c" style="left:904px;width:69px;"></div><div class="c" style="left:974px;width:80px;"><svg style="left:22px;top:6px" width="9" height="13" viewBox="0 0 9 13"><path d="M4.5 .7C6.7 .7 8.3 2.3 8.3 4.4 8.3 7.2 4.5 12 4.5 12S.7 7.2 .7 4.4C.7 2.3 2.3 .7 4.5 .7z" fill="#dcdcdc" stroke="#5b5d5e" stroke-width="1.3"/><circle cx="4.5" cy="4" r="2" fill="#3c3c3c"/></svg><div class="pill" style="left:37px;width:23px;padding:0;text-align:center">0</div></div><div class="c" style="left:1055px;width:108px;"><svg style="left:34px;top:6px" width="12" height="13" viewBox="0 0 12 13"><path d="M6 1.2L2.3 7.5h7.4z" fill="#d8d8d8" stroke="#4a4a4a" stroke-width="1.2" stroke-linejoin="round"/><path d="M.500 8.8h5v3.5h-5zM6.5 8.8h5v3.5h-5z" fill="#3c3c3c"/></svg><div class="pill" style="left:52px;width:23px;padding:0;text-align:center">0</div></div><div class="c" style="left:1164px;width:119px;"><svg style="left:40px;top:6px" width="13" height="13" viewBox="0 0 13 13"><path d="M2 11L11 2" stroke="#4a4a4a" stroke-width="1.5"/><path d="M1 1l5 5M7.5 7.5l4 4" stroke="#4a4a4a" stroke-width="1.2"/><circle cx="2.3" cy="2.3" r="1.8" fill="#4a4a4a"/><circle cx="10.7" cy="10.7" r="1.8" fill="#4a4a4a"/><circle cx="10.5" cy="2.5" r="1.3" fill="#4a4a4a"/><circle cx="2.5" cy="10.5" r="1.3" fill="#4a4a4a"/></svg><div class="pill" style="left:58px;width:23px;padding:0;text-align:center">0</div></div><div class="c" style="left:1284px;width:69px;"><svg style="left:19px;top:6px" width="13" height="13" viewBox="0 0 13 13"><rect x=".8" y=".8" width="11.4" height="11.4" rx="1.2" fill="none" stroke="#5b5d5e" stroke-width="1.4"/><path d="M8.5 3v7H6a2 2 0 0 1 0-4h2.5" fill="none" stroke="#5b5d5e" stroke-width="1.4"/></svg><span style="position:absolute;left:41px">0</span></div><div class="c" style="left:1354px;width:99px;"><svg style="left:30px;top:7px" width="11" height="11" viewBox="0 0 13 13"><path d="M2 11c-1.5-1.5-.5-3 .5-4l5-5c1.5-1.5 3-1 4 0s1 2.5 0 3.5l-5 5c-.8.8-1.8.500-2.3 0s-.6-1.4.2-2.2l4-4" fill="none" stroke="#4a4a4a" stroke-width="2" stroke-linecap="round"/></svg><div class="pill" style="left:46px;width:23px;padding:0;text-align:center">0</div></div><div class="c" style="left:1454px;width:125px;"></div><div class="c" style="left:1580px;width:123px;"></div><div class="c" style="left:1704px;width:144px;padding-left:15px;">Saritha VADUGURU</div></div><div class="row e" style="top:278px"><div class="n">10</div><div class="c" style="left:34px;width:149px;padding-left:15px;">CR-0000107</div><div class="c" style="left:184px;width:149px;padding-left:15px;">CR-0000107</div><div class="c" style="left:334px;width:79px;padding-left:16px;">479</div><div class="c" style="left:414px;width:99px;"><svg style="left:11px;top:6px" width="13" height="14" viewBox="0 0 13 14"><path d="M0 0h13v3.5H0z" fill="#4f8a3c"/><path d="M2 5h9l-1 6H3z" fill="none" stroke="#4f8a3c" stroke-width="1.6"/><path d="M3 8h7" stroke="#4f8a3c" stroke-width="1.4"/><path d="M2.5 13.5h8" stroke="#4f8a3c" stroke-width="1.4"/></svg><div class="pill" style="left:27.5px;">Low</div></div><div class="c" style="left:514px;width:75px;"><div class="age" style="left:15.5px;width:44px">4240</div></div><div class="c" style="left:590px;width:79px;"><div class="pb"><span style="">0%</span></div></div><div class="c" style="left:670px;width:123px;"><svg style="left:10px;top:6px" width="12" height="13" viewBox="0 0 12 13"><circle cx="6" cy="6.5" r="5.2" fill="none" stroke="#a734a8" stroke-width="1.4"/><path d="M1 6.5h10M3.6 4h4.8M3.6 9h4.8" stroke="#a734a8" stroke-width="1.1"/></svg><div class="pill" style="left:25px;padding-left:9.5px">Draft</div></div><div class="c" style="left:794px;width:109px;"><svg style="left:36px;top:6px" width="10" height="13" viewBox="0 0 10 13"><rect x=".8" y="1.8" width="8.4" height="10.4" rx="1.2" fill="none" stroke="#5b5d5e" stroke-width="1.4"/><rect x="3" y="0" width="4" height="3" fill="#5b5d5e"/><path d="M3 7h4" stroke="#5b5d5e" stroke-width="1.2"/></svg><div class="pill" style="left:52px;width:23px;padding:0;text-align:center">0</div></div><div class="c" style="left:904px;width:69px;"></div><div class="c" style="left:974px;width:80px;"><svg style="left:22px;top:6px" width="9" height="13" viewBox="0 0 9 13"><path d="M4.5 .7C6.7 .7 8.3 2.3 8.3 4.4 8.3 7.2 4.5 12 4.5 12S.7 7.2 .7 4.4C.7 2.3 2.3 .7 4.5 .7z" fill="#dcdcdc" stroke="#5b5d5e" stroke-width="1.3"/><circle cx="4.5" cy="4" r="2" fill="#3c3c3c"/></svg><div class="pill" style="left:37px;width:23px;padding:0;text-align:center">0</div></div><div class="c" style="left:1055px;width:108px;"><svg style="left:34px;top:6px" width="12" height="13" viewBox="0 0 12 13"><path d="M6 1.2L2.3 7.5h7.4z" fill="#d8d8d8" stroke="#4a4a4a" stroke-width="1.2" stroke-linejoin="round"/><path d="M.500 8.8h5v3.5h-5zM6.5 8.8h5v3.5h-5z" fill="#3c3c3c"/></svg><div class="pill" style="left:52px;width:23px;padding:0;text-align:center">0</div></div><div class="c" style="left:1164px;width:119px;"><svg style="left:40px;top:6px" width="13" height="13" viewBox="0 0 13 13"><path d="M2 11L11 2" stroke="#4a4a4a" stroke-width="1.5"/><path d="M1 1l5 5M7.5 7.5l4 4" stroke="#4a4a4a" stroke-width="1.2"/><circle cx="2.3" cy="2.3" r="1.8" fill="#4a4a4a"/><circle cx="10.7" cy="10.7" r="1.8" fill="#4a4a4a"/><circle cx="10.5" cy="2.5" r="1.3" fill="#4a4a4a"/><circle cx="2.5" cy="10.5" r="1.3" fill="#4a4a4a"/></svg><div class="pill" style="left:58px;width:23px;padding:0;text-align:center">0</div></div><div class="c" style="left:1284px;width:69px;"><svg style="left:19px;top:6px" width="13" height="13" viewBox="0 0 13 13"><rect x=".8" y=".8" width="11.4" height="11.4" rx="1.2" fill="none" stroke="#5b5d5e" stroke-width="1.4"/><path d="M8.5 3v7H6a2 2 0 0 1 0-4h2.5" fill="none" stroke="#5b5d5e" stroke-width="1.4"/></svg><span style="position:absolute;left:41px">0</span></div><div class="c" style="left:1354px;width:99px;"><svg style="left:30px;top:7px" width="11" height="11" viewBox="0 0 13 13"><path d="M2 11c-1.5-1.5-.5-3 .5-4l5-5c1.5-1.5 3-1 4 0s1 2.5 0 3.5l-5 5c-.8.8-1.8.500-2.3 0s-.6-1.4.2-2.2l4-4" fill="none" stroke="#4a4a4a" stroke-width="2" stroke-linecap="round"/></svg><div class="pill" style="left:46px;width:23px;padding:0;text-align:center">0</div></div><div class="c" style="left:1454px;width:125px;"></div><div class="c" style="left:1580px;width:123px;"></div><div class="c" style="left:1704px;width:144px;padding-left:15px;">Saritha VADUGURU</div></div><div class="row" style="top:303px"><div class="n">11</div><div class="c" style="left:34px;width:149px;padding-left:15px;">CR-0000110</div><div class="c" style="left:184px;width:149px;padding-left:15px;">CR-0000110</div><div class="c" style="left:334px;width:79px;padding-left:16px;">478</div><div class="c" style="left:414px;width:99px;"><svg style="left:11px;top:6px" width="13" height="14" viewBox="0 0 13 14"><path d="M0 0h13v3.5H0z" fill="#4f8a3c"/><path d="M2 5h9l-1 6H3z" fill="none" stroke="#4f8a3c" stroke-width="1.6"/><path d="M3 8h7" stroke="#4f8a3c" stroke-width="1.4"/><path d="M2.5 13.5h8" stroke="#4f8a3c" stroke-width="1.4"/></svg><div class="pill" style="left:27.5px;">Low</div></div><div class="c" style="left:514px;width:75px;"><div class="age" style="left:15.5px;width:44px">3904</div></div><div class="c" style="left:590px;width:79px;"><div class="pb"><u style="width:44.2px"></u><span style="color:#fff;">75%</span></div></div><div class="c" style="left:670px;width:123px;"><svg style="left:10px;top:6px" width="12" height="13" viewBox="0 0 12 13"><circle cx="6" cy="6.5" r="5.2" fill="none" stroke="#6e6e6e" stroke-width="1.4"/><path d="M1 6.5h10M3.6 4h4.8M3.6 9h4.8" stroke="#6e6e6e" stroke-width="1.1"/></svg><div class="pill" style="left:25px;padding-left:9.5px">Approved</div></div><div class="c" style="left:794px;width:109px;"><svg style="left:36px;top:6px" width="10" height="13" viewBox="0 0 10 13"><rect x=".8" y="1.8" width="8.4" height="10.4" rx="1.2" fill="none" stroke="#5b5d5e" stroke-width="1.4"/><rect x="3" y="0" width="4" height="3" fill="#5b5d5e"/><path d="M3 7h4" stroke="#5b5d5e" stroke-width="1.2"/></svg><div class="pill" style="left:52px;width:23px;padding:0;text-align:center">0</div></div><div class="c" style="left:904px;width:69px;"><svg style="left:12px;top:6.5px" width="10" height="12" viewBox="0 0 11 13"><path d="M1 0v13" stroke="#8f0c0c" stroke-width="1.8"/><path d="M2 1c3-1.5 5 1.5 9 0v6c-4 1.5-6-1.5-9 0z" fill="#a01010"/></svg><span style="position:absolute;left:32px">3...</span></div><div class="c" style="left:974px;width:80px;"><svg style="left:22px;top:6px" width="9" height="13" viewBox="0 0 9 13"><path d="M4.5 .7C6.7 .7 8.3 2.3 8.3 4.4 8.3 7.2 4.5 12 4.5 12S.7 7.2 .7 4.4C.7 2.3 2.3 .7 4.5 .7z" fill="#dcdcdc" stroke="#5b5d5e" stroke-width="1.3"/><circle cx="4.5" cy="4" r="2" fill="#3c3c3c"/></svg><div class="pill" style="left:37px;width:23px;padding:0;text-align:center">0</div></div><div class="c" style="left:1055px;width:108px;"><svg style="left:34px;top:6px" width="12" height="13" viewBox="0 0 12 13"><path d="M6 1.2L2.3 7.5h7.4z" fill="#d8d8d8" stroke="#4a4a4a" stroke-width="1.2" stroke-linejoin="round"/><path d="M.500 8.8h5v3.5h-5zM6.5 8.8h5v3.5h-5z" fill="#3c3c3c"/></svg><div class="pill" style="left:52px;width:23px;padding:0;text-align:center">1</div></div><div class="c" style="left:1164px;width:119px;"><svg style="left:40px;top:6px" width="13" height="13" viewBox="0 0 13 13"><path d="M2 11L11 2" stroke="#4a4a4a" stroke-width="1.5"/><path d="M1 1l5 5M7.5 7.5l4 4" stroke="#4a4a4a" stroke-width="1.2"/><circle cx="2.3" cy="2.3" r="1.8" fill="#4a4a4a"/><circle cx="10.7" cy="10.7" r="1.8" fill="#4a4a4a"/><circle cx="10.5" cy="2.5" r="1.3" fill="#4a4a4a"/><circle cx="2.5" cy="10.5" r="1.3" fill="#4a4a4a"/></svg><div class="pill" style="left:58px;width:23px;padding:0;text-align:center">0</div></div><div class="c" style="left:1284px;width:69px;"><svg style="left:19px;top:6px" width="13" height="13" viewBox="0 0 13 13"><rect x=".8" y=".8" width="11.4" height="11.4" rx="1.2" fill="none" stroke="#5b5d5e" stroke-width="1.4"/><path d="M8.5 3v7H6a2 2 0 0 1 0-4h2.5" fill="none" stroke="#5b5d5e" stroke-width="1.4"/></svg><span style="position:absolute;left:41px">0</span></div><div class="c" style="left:1354px;width:99px;"><svg style="left:30px;top:7px" width="11" height="11" viewBox="0 0 13 13"><path d="M2 11c-1.5-1.5-.5-3 .5-4l5-5c1.5-1.5 3-1 4 0s1 2.5 0 3.5l-5 5c-.8.8-1.8.500-2.3 0s-.6-1.4.2-2.2l4-4" fill="none" stroke="#4a4a4a" stroke-width="2" stroke-linecap="round"/></svg><div class="pill" style="left:46px;width:23px;padding:0;text-align:center">0</div></div><div class="c" style="left:1454px;width:125px;"><div class="date">Feb 21,2015</div></div><div class="c" style="left:1580px;width:123px;"><div class="date" style="left:10.5px">Feb 21,2015</div></div><div class="c" style="left:1704px;width:144px;padding-left:15px;">Pojula MUNICHANDRA.</div></div><div class="row e" style="top:328px"><div class="n">12</div><div class="c" style="left:34px;width:149px;padding-left:15px;">CR-0000111</div><div class="c" style="left:184px;width:149px;padding-left:15px;">CR-0000111</div><div class="c" style="left:334px;width:79px;padding-left:16px;">476</div><div class="c" style="left:414px;width:99px;"><svg style="left:11px;top:6px" width="13" height="14" viewBox="0 0 13 14"><path d="M0 0h13v3.5H0z" fill="#4f8a3c"/><path d="M2 5h9l-1 6H3z" fill="none" stroke="#4f8a3c" stroke-width="1.6"/><path d="M3 8h7" stroke="#4f8a3c" stroke-width="1.4"/><path d="M2.5 13.5h8" stroke="#4f8a3c" stroke-width="1.4"/></svg><div class="pill" style="left:27.5px;">Low</div></div><div class="c" style="left:514px;width:75px;"><div class="age" style="left:15.5px;width:44px">3840</div></div><div class="c" style="left:590px;width:79px;"><div class="pb"><span style="">0%</span></div></div><div class="c" style="left:670px;width:123px;"><svg style="left:10px;top:6px" width="12" height="13" viewBox="0 0 12 13"><circle cx="6" cy="6.5" r="5.2" fill="none" stroke="#a734a8" stroke-width="1.4"/><path d="M1 6.5h10M3.6 4h4.8M3.6 9h4.8" stroke="#a734a8" stroke-width="1.1"/></svg><div class="pill" style="left:25px;padding-left:9.5px">Draft</div></div><div class="c" style="left:794px;width:109px;"><svg style="left:36px;top:6px" width="10" height="13" viewBox="0 0 10 13"><rect x=".8" y="1.8" width="8.4" height="10.4" rx="1.2" fill="none" stroke="#5b5d5e" stroke-width="1.4"/><rect x="3" y="0" width="4" height="3" fill="#5b5d5e"/><path d="M3 7h4" stroke="#5b5d5e" stroke-width="1.2"/></svg><div class="pill" style="left:52px;width:23px;padding:0;text-align:center">0</div></div><div class="c" style="left:904px;width:69px;"></div><div class="c" style="left:974px;width:80px;"><svg style="left:22px;top:6px" width="9" height="13" viewBox="0 0 9 13"><path d="M4.5 .7C6.7 .7 8.3 2.3 8.3 4.4 8.3 7.2 4.5 12 4.5 12S.7 7.2 .7 4.4C.7 2.3 2.3 .7 4.5 .7z" fill="#dcdcdc" stroke="#5b5d5e" stroke-width="1.3"/><circle cx="4.5" cy="4" r="2" fill="#3c3c3c"/></svg><div class="pill" style="left:37px;width:23px;padding:0;text-align:center">0</div></div><div class="c" style="left:1055px;width:108px;"><svg style="left:34px;top:6px" width="12" height="13" viewBox="0 0 12 13"><path d="M6 1.2L2.3 7.5h7.4z" fill="#d8d8d8" stroke="#4a4a4a" stroke-width="1.2" stroke-linejoin="round"/><path d="M.500 8.8h5v3.5h-5zM6.5 8.8h5v3.5h-5z" fill="#3c3c3c"/></svg><div class="pill" style="left:52px;width:23px;padding:0;text-align:center">0</div></div><div class="c" style="left:1164px;width:119px;"><svg style="left:40px;top:6px" width="13" height="13" viewBox="0 0 13 13"><path d="M2 11L11 2" stroke="#4a4a4a" stroke-width="1.5"/><path d="M1 1l5 5M7.5 7.5l4 4" stroke="#4a4a4a" stroke-width="1.2"/><circle cx="2.3" cy="2.3" r="1.8" fill="#4a4a4a"/><circle cx="10.7" cy="10.7" r="1.8" fill="#4a4a4a"/><circle cx="10.5" cy="2.5" r="1.3" fill="#4a4a4a"/><circle cx="2.5" cy="10.5" r="1.3" fill="#4a4a4a"/></svg><div class="pill" style="left:58px;width:23px;padding:0;text-align:center">0</div></div><div class="c" style="left:1284px;width:69px;"><svg style="left:19px;top:6px" width="13" height="13" viewBox="0 0 13 13"><rect x=".8" y=".8" width="11.4" height="11.4" rx="1.2" fill="none" stroke="#5b5d5e" stroke-width="1.4"/><path d="M8.5 3v7H6a2 2 0 0 1 0-4h2.5" fill="none" stroke="#5b5d5e" stroke-width="1.4"/></svg><span style="position:absolute;left:41px">0</span></div><div class="c" style="left:1354px;width:99px;"><svg style="left:30px;top:7px" width="11" height="11" viewBox="0 0 13 13"><path d="M2 11c-1.5-1.5-.5-3 .5-4l5-5c1.5-1.5 3-1 4 0s1 2.5 0 3.5l-5 5c-.8.8-1.8.500-2.3 0s-.6-1.4.2-2.2l4-4" fill="none" stroke="#4a4a4a" stroke-width="2" stroke-linecap="round"/></svg><div class="pill" style="left:46px;width:23px;padding:0;text-align:center">0</div></div><div class="c" style="left:1454px;width:125px;"></div><div class="c" style="left:1580px;width:123px;"></div><div class="c" style="left:1704px;width:144px;padding-left:15px;">Mandeep SINGH</div></div><div class="row" style="top:353px"><div class="n">13</div><div class="c" style="left:34px;width:149px;padding-left:15px;">CR-0000112</div><div class="c" style="left:184px;width:149px;padding-left:15px;">CR-0000112</div><div class="c" style="left:334px;width:79px;padding-left:16px;">476</div><div class="c" style="left:414px;width:99px;"><svg style="left:11px;top:6px" width="13" height="14" viewBox="0 0 13 14"><path d="M0 0h13v3.5H0z" fill="#4f8a3c"/><path d="M2 5h9l-1 6H3z" fill="none" stroke="#4f8a3c" stroke-width="1.6"/><path d="M3 8h7" stroke="#4f8a3c" stroke-width="1.4"/><path d="M2.5 13.5h8" stroke="#4f8a3c" stroke-width="1.4"/></svg><div class="pill" style="left:27.5px;">Low</div></div><div class="c" style="left:514px;width:75px;"><div class="age" style="left:15.5px;width:44px">3840</div></div><div class="c" style="left:590px;width:79px;"><div class="pb"><span style="">0%</span></div></div><div class="c" style="left:670px;width:123px;"><svg style="left:10px;top:6px" width="12" height="13" viewBox="0 0 12 13"><circle cx="6" cy="6.5" r="5.2" fill="none" stroke="#a734a8" stroke-width="1.4"/><path d="M1 6.5h10M3.6 4h4.8M3.6 9h4.8" stroke="#a734a8" stroke-width="1.1"/></svg><div class="pill" style="left:25px;padding-left:9.5px">Draft</div></div><div class="c" style="left:794px;width:109px;"><svg style="left:36px;top:6px" width="10" height="13" viewBox="0 0 10 13"><rect x=".8" y="1.8" width="8.4" height="10.4" rx="1.2" fill="none" stroke="#5b5d5e" stroke-width="1.4"/><rect x="3" y="0" width="4" height="3" fill="#5b5d5e"/><path d="M3 7h4" stroke="#5b5d5e" stroke-width="1.2"/></svg><div class="pill" style="left:52px;width:23px;padding:0;text-align:center">0</div></div><div class="c" style="left:904px;width:69px;"></div><div class="c" style="left:974px;width:80px;"><svg style="left:22px;top:6px" width="9" height="13" viewBox="0 0 9 13"><path d="M4.5 .7C6.7 .7 8.3 2.3 8.3 4.4 8.3 7.2 4.5 12 4.5 12S.7 7.2 .7 4.4C.7 2.3 2.3 .7 4.5 .7z" fill="#dcdcdc" stroke="#5b5d5e" stroke-width="1.3"/><circle cx="4.5" cy="4" r="2" fill="#3c3c3c"/></svg><div class="pill" style="left:37px;width:23px;padding:0;text-align:center">1</div></div><div class="c" style="left:1055px;width:108px;"><svg style="left:34px;top:6px" width="12" height="13" viewBox="0 0 12 13"><path d="M6 1.2L2.3 7.5h7.4z" fill="#d8d8d8" stroke="#4a4a4a" stroke-width="1.2" stroke-linejoin="round"/><path d="M.500 8.8h5v3.5h-5zM6.5 8.8h5v3.5h-5z" fill="#3c3c3c"/></svg><div class="pill" style="left:52px;width:23px;padding:0;text-align:center">1</div></div><div class="c" style="left:1164px;width:119px;"><svg style="left:40px;top:6px" width="13" height="13" viewBox="0 0 13 13"><path d="M2 11L11 2" stroke="#4a4a4a" stroke-width="1.5"/><path d="M1 1l5 5M7.5 7.5l4 4" stroke="#4a4a4a" stroke-width="1.2"/><circle cx="2.3" cy="2.3" r="1.8" fill="#4a4a4a"/><circle cx="10.7" cy="10.7" r="1.8" fill="#4a4a4a"/><circle cx="10.5" cy="2.5" r="1.3" fill="#4a4a4a"/><circle cx="2.5" cy="10.5" r="1.3" fill="#4a4a4a"/></svg><div class="pill" style="left:58px;width:23px;padding:0;text-align:center">0</div></div><div class="c" style="left:1284px;width:69px;"><svg style="left:19px;top:6px" width="13" height="13" viewBox="0 0 13 13"><rect x=".8" y=".8" width="11.4" height="11.4" rx="1.2" fill="none" stroke="#5b5d5e" stroke-width="1.4"/><path d="M8.5 3v7H6a2 2 0 0 1 0-4h2.5" fill="none" stroke="#5b5d5e" stroke-width="1.4"/></svg><span style="position:absolute;left:41px">0</span></div><div class="c" style="left:1354px;width:99px;"><svg style="left:30px;top:7px" width="11" height="11" viewBox="0 0 13 13"><path d="M2 11c-1.5-1.5-.5-3 .5-4l5-5c1.5-1.5 3-1 4 0s1 2.5 0 3.5l-5 5c-.8.8-1.8.500-2.3 0s-.6-1.4.2-2.2l4-4" fill="none" stroke="#4a4a4a" stroke-width="2" stroke-linecap="round"/></svg><div class="pill" style="left:46px;width:23px;padding:0;text-align:center">0</div></div><div class="c" style="left:1454px;width:125px;"></div><div class="c" style="left:1580px;width:123px;"></div><div class="c" style="left:1704px;width:144px;padding-left:15px;">Mandeep SINGH</div></div><div class="row e" style="top:378px"><div class="n">14</div><div class="c" style="left:34px;width:149px;padding-left:15px;">CR-0000113</div><div class="c" style="left:184px;width:149px;padding-left:15px;">CR-0000113</div><div class="c" style="left:334px;width:79px;padding-left:16px;">475</div><div class="c" style="left:414px;width:99px;"><svg style="left:11px;top:6px" width="13" height="14" viewBox="0 0 13 14"><path d="M0 0h13v3.5H0z" fill="#4f8a3c"/><path d="M2 5h9l-1 6H3z" fill="none" stroke="#4f8a3c" stroke-width="1.6"/><path d="M3 8h7" stroke="#4f8a3c" stroke-width="1.4"/><path d="M2.5 13.5h8" stroke="#4f8a3c" stroke-width="1.4"/></svg><div class="pill" style="left:27.5px;">Low</div></div><div class="c" style="left:514px;width:75px;"><div class="age" style="left:15.5px;width:44px">3796</div></div><div class="c" style="left:590px;width:79px;"><div class="pb"><span style="">0%</span></div></div><div class="c" style="left:670px;width:123px;"><svg style="left:10px;top:6px" width="12" height="13" viewBox="0 0 12 13"><circle cx="6" cy="6.5" r="5.2" fill="none" stroke="#a734a8" stroke-width="1.4"/><path d="M1 6.5h10M3.6 4h4.8M3.6 9h4.8" stroke="#a734a8" stroke-width="1.1"/></svg><div class="pill" style="left:25px;padding-left:9.5px">Draft</div></div><div class="c" style="left:794px;width:109px;"><svg style="left:36px;top:6px" width="10" height="13" viewBox="0 0 10 13"><rect x=".8" y="1.8" width="8.4" height="10.4" rx="1.2" fill="none" stroke="#5b5d5e" stroke-width="1.4"/><rect x="3" y="0" width="4" height="3" fill="#5b5d5e"/><path d="M3 7h4" stroke="#5b5d5e" stroke-width="1.2"/></svg><div class="pill" style="left:52px;width:23px;padding:0;text-align:center">0</div></div><div class="c" style="left:904px;width:69px;"></div><div class="c" style="left:974px;width:80px;"><svg style="left:22px;top:6px" width="9" height="13" viewBox="0 0 9 13"><path d="M4.5 .7C6.7 .7 8.3 2.3 8.3 4.4 8.3 7.2 4.5 12 4.5 12S.7 7.2 .7 4.4C.7 2.3 2.3 .7 4.5 .7z" fill="#dcdcdc" stroke="#5b5d5e" stroke-width="1.3"/><circle cx="4.5" cy="4" r="2" fill="#3c3c3c"/></svg><div class="pill" style="left:37px;width:23px;padding:0;text-align:center">0</div></div><div class="c" style="left:1055px;width:108px;"><svg style="left:34px;top:6px" width="12" height="13" viewBox="0 0 12 13"><path d="M6 1.2L2.3 7.5h7.4z" fill="#d8d8d8" stroke="#4a4a4a" stroke-width="1.2" stroke-linejoin="round"/><path d="M.500 8.8h5v3.5h-5zM6.5 8.8h5v3.5h-5z" fill="#3c3c3c"/></svg><div class="pill" style="left:52px;width:23px;padding:0;text-align:center">0</div></div><div class="c" style="left:1164px;width:119px;"><svg style="left:40px;top:6px" width="13" height="13" viewBox="0 0 13 13"><path d="M2 11L11 2" stroke="#4a4a4a" stroke-width="1.5"/><path d="M1 1l5 5M7.5 7.5l4 4" stroke="#4a4a4a" stroke-width="1.2"/><circle cx="2.3" cy="2.3" r="1.8" fill="#4a4a4a"/><circle cx="10.7" cy="10.7" r="1.8" fill="#4a4a4a"/><circle cx="10.5" cy="2.5" r="1.3" fill="#4a4a4a"/><circle cx="2.5" cy="10.5" r="1.3" fill="#4a4a4a"/></svg><div class="pill" style="left:58px;width:23px;padding:0;text-align:center">0</div></div><div class="c" style="left:1284px;width:69px;"><svg style="left:19px;top:6px" width="13" height="13" viewBox="0 0 13 13"><rect x=".8" y=".8" width="11.4" height="11.4" rx="1.2" fill="none" stroke="#5b5d5e" stroke-width="1.4"/><path d="M8.5 3v7H6a2 2 0 0 1 0-4h2.5" fill="none" stroke="#5b5d5e" stroke-width="1.4"/></svg><span style="position:absolute;left:41px">0</span></div><div class="c" style="left:1354px;width:99px;"><svg style="left:30px;top:7px" width="11" height="11" viewBox="0 0 13 13"><path d="M2 11c-1.5-1.5-.5-3 .5-4l5-5c1.5-1.5 3-1 4 0s1 2.5 0 3.5l-5 5c-.8.8-1.8.500-2.3 0s-.6-1.4.2-2.2l4-4" fill="none" stroke="#4a4a4a" stroke-width="2" stroke-linecap="round"/></svg><div class="pill" style="left:46px;width:23px;padding:0;text-align:center">0</div></div><div class="c" style="left:1454px;width:125px;"></div><div class="c" style="left:1580px;width:123px;"></div><div class="c" style="left:1704px;width:144px;padding-left:15px;">Pojula MUNICHANDRA.</div></div><div class="row" style="top:403px"><div class="n">15</div><div class="c" style="left:34px;width:149px;padding-left:15px;">CR-0000115</div><div class="c" style="left:184px;width:149px;padding-left:15px;">CR-0000115</div><div class="c" style="left:334px;width:79px;padding-left:16px;">473</div><div class="c" style="left:414px;width:99px;"><svg style="left:11px;top:6px" width="13" height="14" viewBox="0 0 13 14"><path d="M0 0h13v3.5H0z" fill="#4f8a3c"/><path d="M2 5h9l-1 6H3z" fill="none" stroke="#4f8a3c" stroke-width="1.6"/><path d="M3 8h7" stroke="#4f8a3c" stroke-width="1.4"/><path d="M2.5 13.5h8" stroke="#4f8a3c" stroke-width="1.4"/></svg><div class="pill" style="left:27.5px;">Low</div></div><div class="c" style="left:514px;width:75px;"><div class="age" style="left:15.5px;width:44px">3770</div></div><div class="c" style="left:590px;width:79px;"><div class="pb"><span style="">0%</span></div></div><div class="c" style="left:670px;width:123px;"><svg style="left:10px;top:6px" width="12" height="13" viewBox="0 0 12 13"><circle cx="6" cy="6.5" r="5.2" fill="none" stroke="#a734a8" stroke-width="1.4"/><path d="M1 6.5h10M3.6 4h4.8M3.6 9h4.8" stroke="#a734a8" stroke-width="1.1"/></svg><div class="pill" style="left:25px;padding-left:9.5px">Draft</div></div><div class="c" style="left:794px;width:109px;"><svg style="left:36px;top:6px" width="10" height="13" viewBox="0 0 10 13"><rect x=".8" y="1.8" width="8.4" height="10.4" rx="1.2" fill="none" stroke="#5b5d5e" stroke-width="1.4"/><rect x="3" y="0" width="4" height="3" fill="#5b5d5e"/><path d="M3 7h4" stroke="#5b5d5e" stroke-width="1.2"/></svg><div class="pill" style="left:52px;width:23px;padding:0;text-align:center">0</div></div><div class="c" style="left:904px;width:69px;"></div><div class="c" style="left:974px;width:80px;"><svg style="left:22px;top:6px" width="9" height="13" viewBox="0 0 9 13"><path d="M4.5 .7C6.7 .7 8.3 2.3 8.3 4.4 8.3 7.2 4.5 12 4.5 12S.7 7.2 .7 4.4C.7 2.3 2.3 .7 4.5 .7z" fill="#dcdcdc" stroke="#5b5d5e" stroke-width="1.3"/><circle cx="4.5" cy="4" r="2" fill="#3c3c3c"/></svg><div class="pill" style="left:37px;width:23px;padding:0;text-align:center">0</div></div><div class="c" style="left:1055px;width:108px;"><svg style="left:34px;top:6px" width="12" height="13" viewBox="0 0 12 13"><path d="M6 1.2L2.3 7.5h7.4z" fill="#d8d8d8" stroke="#4a4a4a" stroke-width="1.2" stroke-linejoin="round"/><path d="M.500 8.8h5v3.5h-5zM6.5 8.8h5v3.5h-5z" fill="#3c3c3c"/></svg><div class="pill" style="left:52px;width:23px;padding:0;text-align:center">0</div></div><div class="c" style="left:1164px;width:119px;"><svg style="left:40px;top:6px" width="13" height="13" viewBox="0 0 13 13"><path d="M2 11L11 2" stroke="#4a4a4a" stroke-width="1.5"/><path d="M1 1l5 5M7.5 7.5l4 4" stroke="#4a4a4a" stroke-width="1.2"/><circle cx="2.3" cy="2.3" r="1.8" fill="#4a4a4a"/><circle cx="10.7" cy="10.7" r="1.8" fill="#4a4a4a"/><circle cx="10.5" cy="2.5" r="1.3" fill="#4a4a4a"/><circle cx="2.5" cy="10.5" r="1.3" fill="#4a4a4a"/></svg><div class="pill" style="left:58px;width:23px;padding:0;text-align:center">0</div></div><div class="c" style="left:1284px;width:69px;"><svg style="left:19px;top:6px" width="13" height="13" viewBox="0 0 13 13"><rect x=".8" y=".8" width="11.4" height="11.4" rx="1.2" fill="none" stroke="#5b5d5e" stroke-width="1.4"/><path d="M8.5 3v7H6a2 2 0 0 1 0-4h2.5" fill="none" stroke="#5b5d5e" stroke-width="1.4"/></svg><span style="position:absolute;left:41px">0</span></div><div class="c" style="left:1354px;width:99px;"><svg style="left:30px;top:7px" width="11" height="11" viewBox="0 0 13 13"><path d="M2 11c-1.5-1.5-.5-3 .5-4l5-5c1.5-1.5 3-1 4 0s1 2.5 0 3.5l-5 5c-.8.8-1.8.500-2.3 0s-.6-1.4.2-2.2l4-4" fill="none" stroke="#4a4a4a" stroke-width="2" stroke-linecap="round"/></svg><div class="pill" style="left:46px;width:23px;padding:0;text-align:center">0</div></div><div class="c" style="left:1454px;width:125px;"></div><div class="c" style="left:1580px;width:123px;"></div><div class="c" style="left:1704px;width:144px;padding-left:15px;">Sridatta SUBBARAYADU</div></div><div class="row e" style="top:428px"><div class="n">16</div><div class="c" style="left:34px;width:149px;padding-left:15px;">CR-0000114</div><div class="c" style="left:184px;width:149px;padding-left:15px;">CR-0000114</div><div class="c" style="left:334px;width:79px;padding-left:16px;">473</div><div class="c" style="left:414px;width:99px;"><svg style="left:11px;top:6px" width="13" height="14" viewBox="0 0 13 14"><path d="M0 0h13v3.5H0z" fill="#4f8a3c"/><path d="M2 5h9l-1 6H3z" fill="none" stroke="#4f8a3c" stroke-width="1.6"/><path d="M3 8h7" stroke="#4f8a3c" stroke-width="1.4"/><path d="M2.5 13.5h8" stroke="#4f8a3c" stroke-width="1.4"/></svg><div class="pill" style="left:27.5px;">Low</div></div><div class="c" style="left:514px;width:75px;"><div class="age" style="left:15.5px;width:44px">3770</div></div><div class="c" style="left:590px;width:79px;"><div class="pb"><span style="">0%</span></div></div><div class="c" style="left:670px;width:123px;"><svg style="left:10px;top:6px" width="12" height="13" viewBox="0 0 12 13"><circle cx="6" cy="6.5" r="5.2" fill="none" stroke="#a734a8" stroke-width="1.4"/><path d="M1 6.5h10M3.6 4h4.8M3.6 9h4.8" stroke="#a734a8" stroke-width="1.1"/></svg><div class="pill" style="left:25px;padding-left:9.5px">Draft</div></div><div class="c" style="left:794px;width:109px;"><svg style="left:36px;top:6px" width="10" height="13" viewBox="0 0 10 13"><rect x=".8" y="1.8" width="8.4" height="10.4" rx="1.2" fill="none" stroke="#5b5d5e" stroke-width="1.4"/><rect x="3" y="0" width="4" height="3" fill="#5b5d5e"/><path d="M3 7h4" stroke="#5b5d5e" stroke-width="1.2"/></svg><div class="pill" style="left:52px;width:23px;padding:0;text-align:center">0</div></div><div class="c" style="left:904px;width:69px;"></div><div class="c" style="left:974px;width:80px;"><svg style="left:22px;top:6px" width="9" height="13" viewBox="0 0 9 13"><path d="M4.5 .7C6.7 .7 8.3 2.3 8.3 4.4 8.3 7.2 4.5 12 4.5 12S.7 7.2 .7 4.4C.7 2.3 2.3 .7 4.5 .7z" fill="#dcdcdc" stroke="#5b5d5e" stroke-width="1.3"/><circle cx="4.5" cy="4" r="2" fill="#3c3c3c"/></svg><div class="pill" style="left:37px;width:23px;padding:0;text-align:center">0</div></div><div class="c" style="left:1055px;width:108px;"><svg style="left:34px;top:6px" width="12" height="13" viewBox="0 0 12 13"><path d="M6 1.2L2.3 7.5h7.4z" fill="#d8d8d8" stroke="#4a4a4a" stroke-width="1.2" stroke-linejoin="round"/><path d="M.500 8.8h5v3.5h-5zM6.5 8.8h5v3.5h-5z" fill="#3c3c3c"/></svg><div class="pill" style="left:52px;width:23px;padding:0;text-align:center">0</div></div><div class="c" style="left:1164px;width:119px;"><svg style="left:40px;top:6px" width="13" height="13" viewBox="0 0 13 13"><path d="M2 11L11 2" stroke="#4a4a4a" stroke-width="1.5"/><path d="M1 1l5 5M7.5 7.5l4 4" stroke="#4a4a4a" stroke-width="1.2"/><circle cx="2.3" cy="2.3" r="1.8" fill="#4a4a4a"/><circle cx="10.7" cy="10.7" r="1.8" fill="#4a4a4a"/><circle cx="10.5" cy="2.5" r="1.3" fill="#4a4a4a"/><circle cx="2.5" cy="10.5" r="1.3" fill="#4a4a4a"/></svg><div class="pill" style="left:58px;width:23px;padding:0;text-align:center">0</div></div><div class="c" style="left:1284px;width:69px;"><svg style="left:19px;top:6px" width="13" height="13" viewBox="0 0 13 13"><rect x=".8" y=".8" width="11.4" height="11.4" rx="1.2" fill="none" stroke="#5b5d5e" stroke-width="1.4"/><path d="M8.5 3v7H6a2 2 0 0 1 0-4h2.5" fill="none" stroke="#5b5d5e" stroke-width="1.4"/></svg><span style="position:absolute;left:41px">0</span></div><div class="c" style="left:1354px;width:99px;"><svg style="left:30px;top:7px" width="11" height="11" viewBox="0 0 13 13"><path d="M2 11c-1.5-1.5-.5-3 .5-4l5-5c1.5-1.5 3-1 4 0s1 2.5 0 3.5l-5 5c-.8.8-1.8.500-2.3 0s-.6-1.4.2-2.2l4-4" fill="none" stroke="#4a4a4a" stroke-width="2" stroke-linecap="round"/></svg><div class="pill" style="left:46px;width:23px;padding:0;text-align:center">0</div></div><div class="c" style="left:1454px;width:125px;"></div><div class="c" style="left:1580px;width:123px;"></div><div class="c" style="left:1704px;width:144px;padding-left:15px;">Sridatta SUBBARAYADU</div></div><div class="row" style="top:453px"><div class="n">17</div><div class="c" style="left:34px;width:149px;padding-left:15px;">CR-0000117</div><div class="c" style="left:184px;width:149px;padding-left:15px;">CR-0000117</div><div class="c" style="left:334px;width:79px;padding-left:16px;">471</div><div class="c" style="left:414px;width:99px;"><svg style="left:11px;top:6px" width="13" height="14" viewBox="0 0 13 14"><path d="M0 0h13v3.5H0z" fill="#4f8a3c"/><path d="M2 5h9l-1 6H3z" fill="none" stroke="#4f8a3c" stroke-width="1.6"/><path d="M3 8h7" stroke="#4f8a3c" stroke-width="1.4"/><path d="M2.5 13.5h8" stroke="#4f8a3c" stroke-width="1.4"/></svg><div class="pill" style="left:27.5px;">Low</div></div><div class="c" style="left:514px;width:75px;"><div class="age" style="left:15.5px;width:44px">3768</div></div><div class="c" style="left:590px;width:79px;"><div class="pb"><span style="">0%</span></div></div><div class="c" style="left:670px;width:123px;"><svg style="left:10px;top:6px" width="12" height="13" viewBox="0 0 12 13"><circle cx="6" cy="6.5" r="5.2" fill="none" stroke="#a734a8" stroke-width="1.4"/><path d="M1 6.5h10M3.6 4h4.8M3.6 9h4.8" stroke="#a734a8" stroke-width="1.1"/></svg><div class="pill" style="left:25px;padding-left:9.5px">Draft</div></div><div class="c" style="left:794px;width:109px;"><svg style="left:36px;top:6px" width="10" height="13" viewBox="0 0 10 13"><rect x=".8" y="1.8" width="8.4" height="10.4" rx="1.2" fill="none" stroke="#5b5d5e" stroke-width="1.4"/><rect x="3" y="0" width="4" height="3" fill="#5b5d5e"/><path d="M3 7h4" stroke="#5b5d5e" stroke-width="1.2"/></svg><div class="pill" style="left:52px;width:23px;padding:0;text-align:center">0</div></div><div class="c" style="left:904px;width:69px;"></div><div class="c" style="left:974px;width:80px;"><svg style="left:22px;top:6px" width="9" height="13" viewBox="0 0 9 13"><path d="M4.5 .7C6.7 .7 8.3 2.3 8.3 4.4 8.3 7.2 4.5 12 4.5 12S.7 7.2 .7 4.4C.7 2.3 2.3 .7 4.5 .7z" fill="#dcdcdc" stroke="#5b5d5e" stroke-width="1.3"/><circle cx="4.5" cy="4" r="2" fill="#3c3c3c"/></svg><div class="pill" style="left:37px;width:23px;padding:0;text-align:center">0</div></div><div class="c" style="left:1055px;width:108px;"><svg style="left:34px;top:6px" width="12" height="13" viewBox="0 0 12 13"><path d="M6 1.2L2.3 7.5h7.4z" fill="#d8d8d8" stroke="#4a4a4a" stroke-width="1.2" stroke-linejoin="round"/><path d="M.500 8.8h5v3.5h-5zM6.5 8.8h5v3.5h-5z" fill="#3c3c3c"/></svg><div class="pill" style="left:52px;width:23px;padding:0;text-align:center">0</div></div><div class="c" style="left:1164px;width:119px;"><svg style="left:40px;top:6px" width="13" height="13" viewBox="0 0 13 13"><path d="M2 11L11 2" stroke="#4a4a4a" stroke-width="1.5"/><path d="M1 1l5 5M7.5 7.5l4 4" stroke="#4a4a4a" stroke-width="1.2"/><circle cx="2.3" cy="2.3" r="1.8" fill="#4a4a4a"/><circle cx="10.7" cy="10.7" r="1.8" fill="#4a4a4a"/><circle cx="10.5" cy="2.5" r="1.3" fill="#4a4a4a"/><circle cx="2.5" cy="10.5" r="1.3" fill="#4a4a4a"/></svg><div class="pill" style="left:58px;width:23px;padding:0;text-align:center">0</div></div><div class="c" style="left:1284px;width:69px;"><svg style="left:19px;top:6px" width="13" height="13" viewBox="0 0 13 13"><rect x=".8" y=".8" width="11.4" height="11.4" rx="1.2" fill="none" stroke="#5b5d5e" stroke-width="1.4"/><path d="M8.5 3v7H6a2 2 0 0 1 0-4h2.5" fill="none" stroke="#5b5d5e" stroke-width="1.4"/></svg><span style="position:absolute;left:41px">0</span></div><div class="c" style="left:1354px;width:99px;"><svg style="left:30px;top:7px" width="11" height="11" viewBox="0 0 13 13"><path d="M2 11c-1.5-1.5-.5-3 .5-4l5-5c1.5-1.5 3-1 4 0s1 2.5 0 3.5l-5 5c-.8.8-1.8.500-2.3 0s-.6-1.4.2-2.2l4-4" fill="none" stroke="#4a4a4a" stroke-width="2" stroke-linecap="round"/></svg><div class="pill" style="left:46px;width:23px;padding:0;text-align:center">0</div></div><div class="c" style="left:1454px;width:125px;"></div><div class="c" style="left:1580px;width:123px;"></div><div class="c" style="left:1704px;width:144px;padding-left:15px;">sahana jogur</div></div><div class="row e" style="top:478px"><div class="n">18</div><div class="c" style="left:34px;width:149px;padding-left:15px;">CR-0000116</div><div class="c" style="left:184px;width:149px;padding-left:15px;">CR-0000116</div><div class="c" style="left:334px;width:79px;padding-left:16px;">471</div><div class="c" style="left:414px;width:99px;"><svg style="left:11px;top:6px" width="13" height="14" viewBox="0 0 13 14"><path d="M0 0h13v3.5H0z" fill="#4f8a3c"/><path d="M2 5h9l-1 6H3z" fill="none" stroke="#4f8a3c" stroke-width="1.6"/><path d="M3 8h7" stroke="#4f8a3c" stroke-width="1.4"/><path d="M2.5 13.5h8" stroke="#4f8a3c" stroke-width="1.4"/></svg><div class="pill" style="left:27.5px;">Low</div></div><div class="c" style="left:514px;width:75px;"><div class="age" style="left:15.5px;width:44px">3768</div></div><div class="c" style="left:590px;width:79px;"><div class="pb"><span style="">0%</span></div></div><div class="c" style="left:670px;width:123px;"><svg style="left:10px;top:6px" width="12" height="13" viewBox="0 0 12 13"><circle cx="6" cy="6.5" r="5.2" fill="none" stroke="#a734a8" stroke-width="1.4"/><path d="M1 6.5h10M3.6 4h4.8M3.6 9h4.8" stroke="#a734a8" stroke-width="1.1"/></svg><div class="pill" style="left:25px;padding-left:9.5px">Draft</div></div><div class="c" style="left:794px;width:109px;"><svg style="left:36px;top:6px" width="10" height="13" viewBox="0 0 10 13"><rect x=".8" y="1.8" width="8.4" height="10.4" rx="1.2" fill="none" stroke="#5b5d5e" stroke-width="1.4"/><rect x="3" y="0" width="4" height="3" fill="#5b5d5e"/><path d="M3 7h4" stroke="#5b5d5e" stroke-width="1.2"/></svg><div class="pill" style="left:52px;width:23px;padding:0;text-align:center">0</div></div><div class="c" style="left:904px;width:69px;"></div><div class="c" style="left:974px;width:80px;"><svg style="left:22px;top:6px" width="9" height="13" viewBox="0 0 9 13"><path d="M4.5 .7C6.7 .7 8.3 2.3 8.3 4.4 8.3 7.2 4.5 12 4.5 12S.7 7.2 .7 4.4C.7 2.3 2.3 .7 4.5 .7z" fill="#dcdcdc" stroke="#5b5d5e" stroke-width="1.3"/><circle cx="4.5" cy="4" r="2" fill="#3c3c3c"/></svg><div class="pill" style="left:37px;width:23px;padding:0;text-align:center">0</div></div><div class="c" style="left:1055px;width:108px;"><svg style="left:34px;top:6px" width="12" height="13" viewBox="0 0 12 13"><path d="M6 1.2L2.3 7.5h7.4z" fill="#d8d8d8" stroke="#4a4a4a" stroke-width="1.2" stroke-linejoin="round"/><path d="M.500 8.8h5v3.5h-5zM6.5 8.8h5v3.5h-5z" fill="#3c3c3c"/></svg><div class="pill" style="left:52px;width:23px;padding:0;text-align:center">0</div></div><div class="c" style="left:1164px;width:119px;"><svg style="left:40px;top:6px" width="13" height="13" viewBox="0 0 13 13"><path d="M2 11L11 2" stroke="#4a4a4a" stroke-width="1.5"/><path d="M1 1l5 5M7.5 7.5l4 4" stroke="#4a4a4a" stroke-width="1.2"/><circle cx="2.3" cy="2.3" r="1.8" fill="#4a4a4a"/><circle cx="10.7" cy="10.7" r="1.8" fill="#4a4a4a"/><circle cx="10.5" cy="2.5" r="1.3" fill="#4a4a4a"/><circle cx="2.5" cy="10.5" r="1.3" fill="#4a4a4a"/></svg><div class="pill" style="left:58px;width:23px;padding:0;text-align:center">0</div></div><div class="c" style="left:1284px;width:69px;"><svg style="left:19px;top:6px" width="13" height="13" viewBox="0 0 13 13"><rect x=".8" y=".8" width="11.4" height="11.4" rx="1.2" fill="none" stroke="#5b5d5e" stroke-width="1.4"/><path d="M8.5 3v7H6a2 2 0 0 1 0-4h2.5" fill="none" stroke="#5b5d5e" stroke-width="1.4"/></svg><span style="position:absolute;left:41px">0</span></div><div class="c" style="left:1354px;width:99px;"><svg style="left:30px;top:7px" width="11" height="11" viewBox="0 0 13 13"><path d="M2 11c-1.5-1.5-.5-3 .5-4l5-5c1.5-1.5 3-1 4 0s1 2.5 0 3.5l-5 5c-.8.8-1.8.500-2.3 0s-.6-1.4.2-2.2l4-4" fill="none" stroke="#4a4a4a" stroke-width="2" stroke-linecap="round"/></svg><div class="pill" style="left:46px;width:23px;padding:0;text-align:center">0</div></div><div class="c" style="left:1454px;width:125px;"></div><div class="c" style="left:1580px;width:123px;"></div><div class="c" style="left:1704px;width:144px;padding-left:15px;">sahana jogur</div></div><div class="row" style="top:503px"><div class="n">19</div><div class="c" style="left:34px;width:149px;padding-left:15px;">CR-0000120</div><div class="c" style="left:184px;width:149px;padding-left:15px;">CR-0000120</div><div class="c" style="left:334px;width:79px;padding-left:16px;">467</div><div class="c" style="left:414px;width:99px;"><svg style="left:11px;top:6px" width="13" height="14" viewBox="0 0 13 14"><path d="M0 0h13v3.5H0z" fill="#4f8a3c"/><path d="M2 5h9l-1 6H3z" fill="none" stroke="#4f8a3c" stroke-width="1.6"/><path d="M3 8h7" stroke="#4f8a3c" stroke-width="1.4"/><path d="M2.5 13.5h8" stroke="#4f8a3c" stroke-width="1.4"/></svg><div class="pill" style="left:27.5px;">Low</div></div><div class="c" style="left:514px;width:75px;"><div class="age" style="left:15.5px;width:44px">3767</div></div><div class="c" style="left:590px;width:79px;"><div class="pb"><span style="">0%</span></div></div><div class="c" style="left:670px;width:123px;"><svg style="left:10px;top:6px" width="12" height="13" viewBox="0 0 12 13"><circle cx="6" cy="6.5" r="5.2" fill="none" stroke="#a734a8" stroke-width="1.4"/><path d="M1 6.5h10M3.6 4h4.8M3.6 9h4.8" stroke="#a734a8" stroke-width="1.1"/></svg><div class="pill" style="left:25px;padding-left:9.5px">Draft</div></div><div class="c" style="left:794px;width:109px;"><svg style="left:36px;top:6px" width="10" height="13" viewBox="0 0 10 13"><rect x=".8" y="1.8" width="8.4" height="10.4" rx="1.2" fill="none" stroke="#5b5d5e" stroke-width="1.4"/><rect x="3" y="0" width="4" height="3" fill="#5b5d5e"/><path d="M3 7h4" stroke="#5b5d5e" stroke-width="1.2"/></svg><div class="pill" style="left:52px;width:23px;padding:0;text-align:center">0</div></div><div class="c" style="left:904px;width:69px;"></div><div class="c" style="left:974px;width:80px;"><svg style="left:22px;top:6px" width="9" height="13" viewBox="0 0 9 13"><path d="M4.5 .7C6.7 .7 8.3 2.3 8.3 4.4 8.3 7.2 4.5 12 4.5 12S.7 7.2 .7 4.4C.7 2.3 2.3 .7 4.5 .7z" fill="#dcdcdc" stroke="#5b5d5e" stroke-width="1.3"/><circle cx="4.5" cy="4" r="2" fill="#3c3c3c"/></svg><div class="pill" style="left:37px;width:23px;padding:0;text-align:center">0</div></div><div class="c" style="left:1055px;width:108px;"><svg style="left:34px;top:6px" width="12" height="13" viewBox="0 0 12 13"><path d="M6 1.2L2.3 7.5h7.4z" fill="#d8d8d8" stroke="#4a4a4a" stroke-width="1.2" stroke-linejoin="round"/><path d="M.500 8.8h5v3.5h-5zM6.5 8.8h5v3.5h-5z" fill="#3c3c3c"/></svg><div class="pill" style="left:52px;width:23px;padding:0;text-align:center">0</div></div><div class="c" style="left:1164px;width:119px;"><svg style="left:40px;top:6px" width="13" height="13" viewBox="0 0 13 13"><path d="M2 11L11 2" stroke="#4a4a4a" stroke-width="1.5"/><path d="M1 1l5 5M7.5 7.5l4 4" stroke="#4a4a4a" stroke-width="1.2"/><circle cx="2.3" cy="2.3" r="1.8" fill="#4a4a4a"/><circle cx="10.7" cy="10.7" r="1.8" fill="#4a4a4a"/><circle cx="10.5" cy="2.5" r="1.3" fill="#4a4a4a"/><circle cx="2.5" cy="10.5" r="1.3" fill="#4a4a4a"/></svg><div class="pill" style="left:58px;width:23px;padding:0;text-align:center">0</div></div><div class="c" style="left:1284px;width:69px;"><svg style="left:19px;top:6px" width="13" height="13" viewBox="0 0 13 13"><rect x=".8" y=".8" width="11.4" height="11.4" rx="1.2" fill="none" stroke="#5b5d5e" stroke-width="1.4"/><path d="M8.5 3v7H6a2 2 0 0 1 0-4h2.5" fill="none" stroke="#5b5d5e" stroke-width="1.4"/></svg><span style="position:absolute;left:41px">0</span></div><div class="c" style="left:1354px;width:99px;"><svg style="left:30px;top:7px" width="11" height="11" viewBox="0 0 13 13"><path d="M2 11c-1.5-1.5-.5-3 .5-4l5-5c1.5-1.5 3-1 4 0s1 2.5 0 3.5l-5 5c-.8.8-1.8.500-2.3 0s-.6-1.4.2-2.2l4-4" fill="none" stroke="#4a4a4a" stroke-width="2" stroke-linecap="round"/></svg><div class="pill" style="left:46px;width:23px;padding:0;text-align:center">0</div></div><div class="c" style="left:1454px;width:125px;"></div><div class="c" style="left:1580px;width:123px;"></div><div class="c" style="left:1704px;width:144px;padding-left:15px;">sahana jogur</div></div><div class="vl" style="left:183px;top:53px;height:600px"></div><div class="vl" style="left:333px;top:53px;height:600px"></div><div class="vl" style="left:413px;top:53px;height:600px"></div><div class="vl" style="left:513px;top:53px;height:600px"></div><div class="vl" style="left:589px;top:53px;height:600px"></div><div class="vl" style="left:669px;top:53px;height:600px"></div><div class="vl" style="left:793px;top:53px;height:600px"></div><div class="vl" style="left:903px;top:53px;height:600px"></div><div class="vl" style="left:973px;top:53px;height:600px"></div><div class="vl" style="left:1054px;top:53px;height:600px"></div><div class="vl" style="left:1163px;top:53px;height:600px"></div><div class="vl" style="left:1283px;top:53px;height:600px"></div><div class="vl" style="left:1353px;top:53px;height:600px"></div><div class="vl" style="left:1453px;top:53px;height:600px"></div><div class="vl" style="left:1579px;top:53px;height:600px"></div><div class="vl" style="left:1703px;top:53px;height:600px"></div></div><div class="abs" style="left:42px;top:1032px;width:1510px;height:6px;border-radius:3px;background:#a3a3a3"></div><div class="abs" style="left:34px;top:1030px;width:0;height:0;border:3.5px solid transparent;border-right:5px solid #9a9a9a;border-left:0"></div><div class="abs" style="left:1874px;top:1031px;width:0;height:0;border:3.5px solid transparent;border-left:5px solid #9a9a9a;border-right:0"></div><div class="abs" style="left:1883px;top:520px;width:5px;height:21px;border-radius:2.5px;background:#a3a3a3"></div><div class="abs" style="left:1882px;top:510px;width:0;height:0;border:3.5px solid transparent;border-bottom:5px solid #9a9a9a;border-top:0"></div><div class="abs" style="left:1882px;top:1022px;width:0;height:0;border:3.5px solid transparent;border-top:5px solid #9a9a9a;border-bottom:0"></div></div></body></html>
